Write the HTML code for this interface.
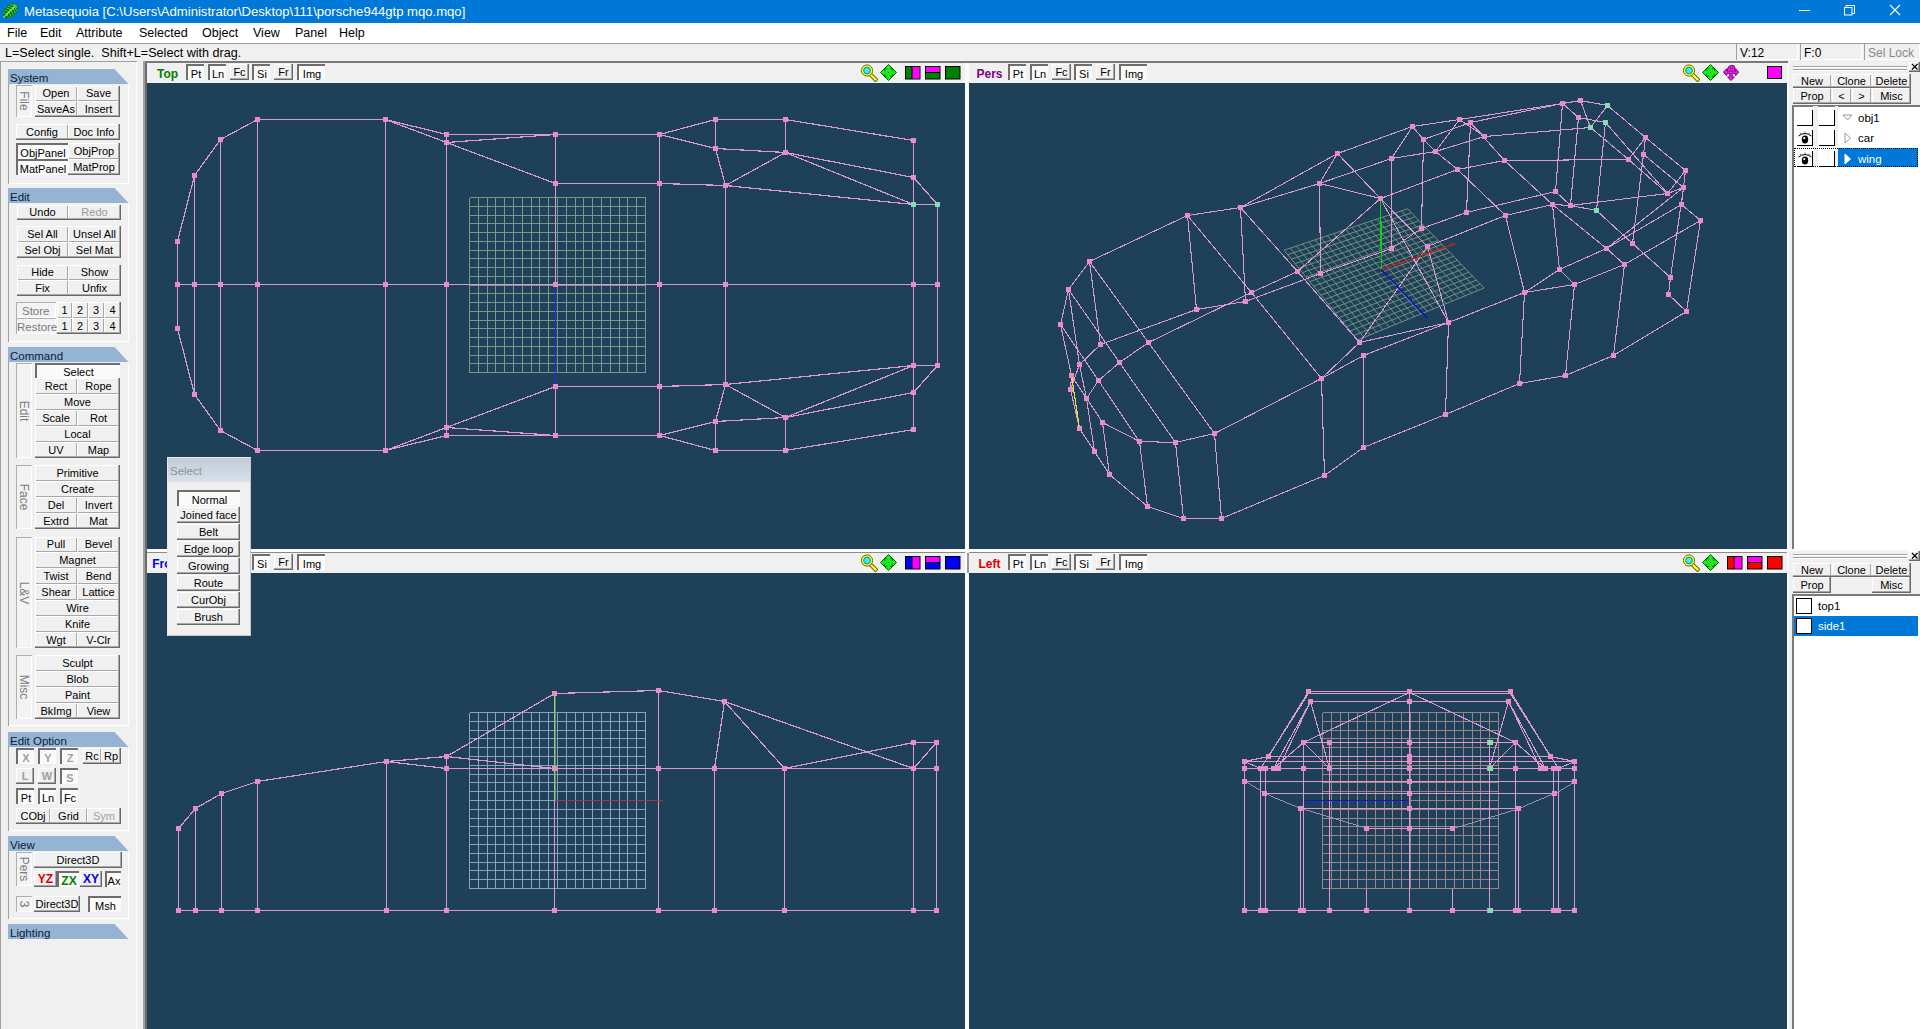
<!DOCTYPE html><html><head><meta charset="utf-8"><style>
html,body{margin:0;padding:0;width:1920px;height:1029px;overflow:hidden;background:#f0f0f0;}
body{position:relative;font-family:"Liberation Sans",sans-serif;}
.t{position:absolute;white-space:pre;line-height:1;}
.b{position:absolute;box-sizing:border-box;text-align:center;white-space:pre;font-family:"Liberation Sans",sans-serif;overflow:hidden;}
svg{position:absolute;left:0;top:0;}
</style></head><body>
<div style="position:absolute;left:0px;top:0px;width:1920px;height:23px;background:#0078d7;"></div>
<svg style="left:0;top:0" width="22" height="22" viewBox="0 0 22 22">
<g transform="rotate(-45 10 11)">
<ellipse cx="10.5" cy="11" rx="8.6" ry="5.8" fill="#0b5a10"/>
<path d="M4 7.2 L6 11 L4 14.8 M6.5 6 L8.8 11 L6.5 16 M9.2 5.4 L11.6 11 L9.2 16.6 M12 5.5 L14.3 11 L12 16.5 M14.7 6.3 L16.6 11 L14.7 15.7 M17 8 L18.2 11 L17 14" stroke="#3cd24a" stroke-width="1.1" fill="none"/>
<path d="M0.8 11 L17.5 11" stroke="#74ff2a" stroke-width="1.4"/>
</g></svg>
<div class="t" style="left:24px;top:4.2px;font:13.1px 'Liberation Sans',sans-serif;color:#fff;">Metasequoia [C:\Users\Administrator\Desktop\111\porsche944gtp mqo.mqo]</div>
<div style="position:absolute;left:1799px;top:10px;width:11px;height:1px;background:#fff;"></div>
<svg style="left:1840px;top:3px" width="20" height="16"><rect x="4.5" y="4.5" width="7.5" height="7.5" fill="none" stroke="#fff"/><path d="M6 4.5 V2.5 H14.5 V10.5 H12" fill="none" stroke="#fff"/></svg>
<svg style="left:1886px;top:1px" width="18" height="18"><path d="M4 4 L14 14 M14 4 L4 14" stroke="#fff" stroke-width="1.1"/></svg>
<div style="position:absolute;left:0px;top:23px;width:1920px;height:20px;background:#fff;"></div>
<div class="t" style="left:7px;top:26px;font:12.5px 'Liberation Sans',sans-serif;color:#000;">File</div>
<div class="t" style="left:40px;top:26px;font:12.5px 'Liberation Sans',sans-serif;color:#000;">Edit</div>
<div class="t" style="left:76px;top:26px;font:12.5px 'Liberation Sans',sans-serif;color:#000;">Attribute</div>
<div class="t" style="left:139px;top:26px;font:12.5px 'Liberation Sans',sans-serif;color:#000;">Selected</div>
<div class="t" style="left:202px;top:26px;font:12.5px 'Liberation Sans',sans-serif;color:#000;">Object</div>
<div class="t" style="left:253px;top:26px;font:12.5px 'Liberation Sans',sans-serif;color:#000;">View</div>
<div class="t" style="left:295px;top:26px;font:12.5px 'Liberation Sans',sans-serif;color:#000;">Panel</div>
<div class="t" style="left:339px;top:26px;font:12.5px 'Liberation Sans',sans-serif;color:#000;">Help</div>
<div style="position:absolute;left:0px;top:43px;width:1920px;height:1px;background:#a0a0a0;"></div>
<div class="t" style="left:5px;top:46px;font:12.6px 'Liberation Sans',sans-serif;color:#000;">L=Select single.  Shift+L=Select with drag.</div>
<div style="position:absolute;left:1736px;top:43px;width:62px;height:17px;box-shadow:inset 1px 1px 0 #a0a0a0, inset -1px -1px 0 #fff;"></div>
<div class="t" style="left:1740px;top:46px;font:12px 'Liberation Sans',sans-serif;color:#000;">V:12</div>
<div style="position:absolute;left:1800px;top:43px;width:62px;height:17px;box-shadow:inset 1px 1px 0 #a0a0a0, inset -1px -1px 0 #fff;"></div>
<div class="t" style="left:1804px;top:46px;font:12px 'Liberation Sans',sans-serif;color:#000;">F:0</div>
<div style="position:absolute;left:1864px;top:43px;width:56px;height:17px;box-shadow:inset 1px 1px 0 #a0a0a0, inset -1px -1px 0 #fff;"></div>
<div class="t" style="left:1868px;top:46px;font:12px 'Liberation Sans',sans-serif;color:#888;">Sel Lock</div>
<div style="position:absolute;left:0px;top:61px;width:137px;height:968px;background:#f0f0f0;box-shadow:inset 1px 1px 0 #a0a0a0, inset -1px 0 0 #fff;"></div>
<svg style="left:8px;top:69px" width="122" height="15"><polygon points="0,0 106.5,0 120.5,15 0,15" fill="#95b3d3"/></svg>
<div class="t" style="left:10px;top:71.5px;font:11.5px 'Liberation Sans',sans-serif;color:#0c1c38;">System</div>
<div style="position:absolute;left:8px;top:84px;width:121px;height:100px;box-shadow:inset 1px 0 0 #a0a0a0, inset -1px -1px 0 #fff;"></div>
<div style="position:absolute;left:16px;top:85px;width:16px;height:32px;background:#f3f3f3;box-shadow:inset 1px 1px 0 #b0b0b0, inset -1px -1px 0 #fff;"></div>
<div class="t" style="left:24.0px;top:101.0px;font-size:12px;color:#7c7c7c;transform:translate(-50%,-50%) rotate(90deg);">File</div>
<div class="b" style="left:35px;top:86px;width:42px;height:15px;line-height:15px;background:#f0f0f0;box-shadow:inset 1px 1px 0 #fff, inset -1px -1px 0 #a8a8a8;color:#000;font-size:11px;"><span style="">Open</span></div>
<div class="b" style="left:77px;top:86px;width:43px;height:15px;line-height:15px;background:#f0f0f0;box-shadow:inset 1px 1px 0 #fff, inset -1px -1px 0 #a8a8a8;color:#000;font-size:11px;"><span style="">Save</span></div>
<div class="b" style="left:35px;top:101px;width:42px;height:16px;line-height:16px;background:#f0f0f0;box-shadow:inset 1px 1px 0 #fff, inset -1px -1px 0 #a8a8a8;color:#000;font-size:11px;"><span style="">SaveAs</span></div>
<div class="b" style="left:77px;top:101px;width:43px;height:16px;line-height:16px;background:#f0f0f0;box-shadow:inset 1px 1px 0 #fff, inset -1px -1px 0 #a8a8a8;color:#000;font-size:11px;"><span style="">Insert</span></div>
<div style="position:absolute;left:35px;top:86px;width:85px;height:31px;box-shadow:inset -1px -1px 0 #696969, inset -2px -2px 0 #a8a8a8;"></div>
<div class="b" style="left:16px;top:124px;width:52px;height:16px;line-height:16px;background:#f0f0f0;box-shadow:inset 1px 1px 0 #fff, inset -1px -1px 0 #a8a8a8;color:#000;font-size:11px;"><span style="">Config</span></div>
<div class="b" style="left:68px;top:124px;width:52px;height:16px;line-height:16px;background:#f0f0f0;box-shadow:inset 1px 1px 0 #fff, inset -1px -1px 0 #a8a8a8;color:#000;font-size:11px;"><span style="">Doc Info</span></div>
<div style="position:absolute;left:16px;top:124px;width:104px;height:16px;box-shadow:inset -1px -1px 0 #696969, inset -2px -2px 0 #a8a8a8;"></div>
<div class="b" style="left:16px;top:143px;width:52px;height:16px;line-height:16px;background:#fafafa;box-shadow:inset 2px 2px 0 #6e6e6e;color:#000;font-size:11px;"><span style="position:relative;top:1.5px;left:1px;">ObjPanel</span></div>
<div class="b" style="left:16px;top:159px;width:52px;height:16px;line-height:16px;background:#fafafa;box-shadow:inset 2px 2px 0 #6e6e6e;color:#000;font-size:11px;"><span style="position:relative;top:1.5px;left:1px;">MatPanel</span></div>
<div class="b" style="left:68px;top:143px;width:52px;height:16px;line-height:16px;background:#f0f0f0;box-shadow:inset 1px 1px 0 #fff, inset -1px -1px 0 #a8a8a8;color:#000;font-size:11px;"><span style="">ObjProp</span></div>
<div class="b" style="left:68px;top:159px;width:52px;height:16px;line-height:16px;background:#f0f0f0;box-shadow:inset 1px 1px 0 #fff, inset -1px -1px 0 #a8a8a8;color:#000;font-size:11px;"><span style="">MatProp</span></div>
<div style="position:absolute;left:68px;top:143px;width:52px;height:32px;box-shadow:inset -1px -1px 0 #696969, inset -2px -2px 0 #a8a8a8;"></div>
<svg style="left:8px;top:188px" width="122" height="15"><polygon points="0,0 106.5,0 120.5,15 0,15" fill="#95b3d3"/></svg>
<div class="t" style="left:10px;top:190.5px;font:11.5px 'Liberation Sans',sans-serif;color:#0c1c38;">Edit</div>
<div style="position:absolute;left:8px;top:203px;width:121px;height:139px;box-shadow:inset 1px 0 0 #a0a0a0, inset -1px -1px 0 #fff;"></div>
<div class="b" style="left:17px;top:205px;width:51px;height:15px;line-height:15px;background:#f0f0f0;box-shadow:inset 1px 1px 0 #fff, inset -1px -1px 0 #a8a8a8;color:#000;font-size:11px;"><span style="">Undo</span></div>
<div class="b" style="left:68px;top:205px;width:53px;height:15px;line-height:15px;background:#f0f0f0;box-shadow:inset 1px 1px 0 #fff, inset -1px -1px 0 #a8a8a8;color:#9a9a9a;font-size:11px;"><span style="">Redo</span></div>
<div style="position:absolute;left:17px;top:205px;width:104px;height:15px;box-shadow:inset -1px -1px 0 #696969, inset -2px -2px 0 #a8a8a8;"></div>
<div class="b" style="left:17px;top:226px;width:51px;height:16px;line-height:16px;background:#f0f0f0;box-shadow:inset 1px 1px 0 #fff, inset -1px -1px 0 #a8a8a8;color:#000;font-size:11px;"><span style="">Sel All</span></div>
<div class="b" style="left:68px;top:226px;width:53px;height:16px;line-height:16px;background:#f0f0f0;box-shadow:inset 1px 1px 0 #fff, inset -1px -1px 0 #a8a8a8;color:#000;font-size:11px;"><span style="">Unsel All</span></div>
<div class="b" style="left:17px;top:242px;width:51px;height:16px;line-height:16px;background:#f0f0f0;box-shadow:inset 1px 1px 0 #fff, inset -1px -1px 0 #a8a8a8;color:#000;font-size:11px;"><span style="">Sel Obj</span></div>
<div class="b" style="left:68px;top:242px;width:53px;height:16px;line-height:16px;background:#f0f0f0;box-shadow:inset 1px 1px 0 #fff, inset -1px -1px 0 #a8a8a8;color:#000;font-size:11px;"><span style="">Sel Mat</span></div>
<div style="position:absolute;left:17px;top:226px;width:104px;height:32px;box-shadow:inset -1px -1px 0 #696969, inset -2px -2px 0 #a8a8a8;"></div>
<div class="b" style="left:17px;top:265px;width:51px;height:15px;line-height:15px;background:#f0f0f0;box-shadow:inset 1px 1px 0 #fff, inset -1px -1px 0 #a8a8a8;color:#000;font-size:11px;"><span style="">Hide</span></div>
<div class="b" style="left:68px;top:265px;width:53px;height:15px;line-height:15px;background:#f0f0f0;box-shadow:inset 1px 1px 0 #fff, inset -1px -1px 0 #a8a8a8;color:#000;font-size:11px;"><span style="">Show</span></div>
<div class="b" style="left:17px;top:280px;width:51px;height:16px;line-height:16px;background:#f0f0f0;box-shadow:inset 1px 1px 0 #fff, inset -1px -1px 0 #a8a8a8;color:#000;font-size:11px;"><span style="">Fix</span></div>
<div class="b" style="left:68px;top:280px;width:53px;height:16px;line-height:16px;background:#f0f0f0;box-shadow:inset 1px 1px 0 #fff, inset -1px -1px 0 #a8a8a8;color:#000;font-size:11px;"><span style="">Unfix</span></div>
<div style="position:absolute;left:17px;top:265px;width:104px;height:31px;box-shadow:inset -1px -1px 0 #696969, inset -2px -2px 0 #a8a8a8;"></div>
<div style="position:absolute;left:16px;top:302px;width:40px;height:16px;background:#f3f3f3;box-shadow:inset 1px 1px 0 #b0b0b0, inset -1px -1px 0 #fff;"></div>
<div class="t" style="left:36.0px;top:310.0px;font-size:12px;color:#7c7c7c;transform:translate(-50%,-50%) rotate(90deg);"></div>
<div class="t" style="left:22px;top:304.5px;font:11.5px 'Liberation Sans',sans-serif;color:#7a7a7a;">Store</div>
<div style="position:absolute;left:16px;top:318px;width:40px;height:16px;background:#f3f3f3;box-shadow:inset 1px 1px 0 #b0b0b0, inset -1px -1px 0 #fff;"></div>
<div class="t" style="left:36.0px;top:326.0px;font-size:12px;color:#7c7c7c;transform:translate(-50%,-50%) rotate(90deg);"></div>
<div class="t" style="left:17px;top:320.5px;font:11.5px 'Liberation Sans',sans-serif;color:#7a7a7a;">Restore</div>
<div class="b" style="left:57px;top:302px;width:15px;height:16px;line-height:16px;background:#f0f0f0;box-shadow:inset 1px 1px 0 #fff, inset -1px -1px 0 #a8a8a8;color:#000;font-size:11px;"><span style="">1</span></div>
<div class="b" style="left:72px;top:302px;width:16px;height:16px;line-height:16px;background:#f0f0f0;box-shadow:inset 1px 1px 0 #fff, inset -1px -1px 0 #a8a8a8;color:#000;font-size:11px;"><span style="">2</span></div>
<div class="b" style="left:88px;top:302px;width:16px;height:16px;line-height:16px;background:#f0f0f0;box-shadow:inset 1px 1px 0 #fff, inset -1px -1px 0 #a8a8a8;color:#000;font-size:11px;"><span style="">3</span></div>
<div class="b" style="left:104px;top:302px;width:17px;height:16px;line-height:16px;background:#f0f0f0;box-shadow:inset 1px 1px 0 #fff, inset -1px -1px 0 #a8a8a8;color:#000;font-size:11px;"><span style="">4</span></div>
<div class="b" style="left:57px;top:318px;width:15px;height:16px;line-height:16px;background:#f0f0f0;box-shadow:inset 1px 1px 0 #fff, inset -1px -1px 0 #a8a8a8;color:#000;font-size:11px;"><span style="">1</span></div>
<div class="b" style="left:72px;top:318px;width:16px;height:16px;line-height:16px;background:#f0f0f0;box-shadow:inset 1px 1px 0 #fff, inset -1px -1px 0 #a8a8a8;color:#000;font-size:11px;"><span style="">2</span></div>
<div class="b" style="left:88px;top:318px;width:16px;height:16px;line-height:16px;background:#f0f0f0;box-shadow:inset 1px 1px 0 #fff, inset -1px -1px 0 #a8a8a8;color:#000;font-size:11px;"><span style="">3</span></div>
<div class="b" style="left:104px;top:318px;width:17px;height:16px;line-height:16px;background:#f0f0f0;box-shadow:inset 1px 1px 0 #fff, inset -1px -1px 0 #a8a8a8;color:#000;font-size:11px;"><span style="">4</span></div>
<div style="position:absolute;left:57px;top:302px;width:64px;height:32px;box-shadow:inset -1px -1px 0 #696969, inset -2px -2px 0 #a8a8a8;"></div>
<svg style="left:8px;top:347px" width="122" height="15"><polygon points="0,0 106.5,0 120.5,15 0,15" fill="#95b3d3"/></svg>
<div class="t" style="left:10px;top:349.5px;font:11.5px 'Liberation Sans',sans-serif;color:#0c1c38;">Command</div>
<div style="position:absolute;left:8px;top:362px;width:121px;height:364px;box-shadow:inset 1px 0 0 #a0a0a0, inset -1px -1px 0 #fff;"></div>
<div style="position:absolute;left:16px;top:363px;width:16px;height:95px;background:#f3f3f3;box-shadow:inset 1px 1px 0 #b0b0b0, inset -1px -1px 0 #fff;"></div>
<div class="t" style="left:24.0px;top:410.5px;font-size:12px;color:#7c7c7c;transform:translate(-50%,-50%) rotate(90deg);">Edit</div>
<div style="position:absolute;left:16px;top:465px;width:16px;height:64px;background:#f3f3f3;box-shadow:inset 1px 1px 0 #b0b0b0, inset -1px -1px 0 #fff;"></div>
<div class="t" style="left:24.0px;top:497.0px;font-size:12px;color:#7c7c7c;transform:translate(-50%,-50%) rotate(90deg);">Face</div>
<div style="position:absolute;left:16px;top:537px;width:16px;height:111px;background:#f3f3f3;box-shadow:inset 1px 1px 0 #b0b0b0, inset -1px -1px 0 #fff;"></div>
<div class="t" style="left:24.0px;top:592.5px;font-size:12px;color:#7c7c7c;transform:translate(-50%,-50%) rotate(90deg);">L&amp;V</div>
<div style="position:absolute;left:16px;top:655px;width:16px;height:64px;background:#f3f3f3;box-shadow:inset 1px 1px 0 #b0b0b0, inset -1px -1px 0 #fff;"></div>
<div class="t" style="left:24.0px;top:687.0px;font-size:12px;color:#7c7c7c;transform:translate(-50%,-50%) rotate(90deg);">Misc</div>
<div class="b" style="left:35px;top:363px;width:85px;height:15px;line-height:15px;background:#fafafa;box-shadow:inset 2px 2px 0 #6e6e6e;color:#000;font-size:11px;"><span style="position:relative;top:1.5px;left:1px;">Select</span></div>
<div class="b" style="left:35px;top:378px;width:42px;height:16px;line-height:16px;background:#f0f0f0;box-shadow:inset 1px 1px 0 #fff, inset -1px -1px 0 #a8a8a8;color:#000;font-size:11px;"><span style="">Rect</span></div>
<div class="b" style="left:77px;top:378px;width:43px;height:16px;line-height:16px;background:#f0f0f0;box-shadow:inset 1px 1px 0 #fff, inset -1px -1px 0 #a8a8a8;color:#000;font-size:11px;"><span style="">Rope</span></div>
<div class="b" style="left:35px;top:394px;width:85px;height:16px;line-height:16px;background:#f0f0f0;box-shadow:inset 1px 1px 0 #fff, inset -1px -1px 0 #a8a8a8;color:#000;font-size:11px;"><span style="">Move</span></div>
<div class="b" style="left:35px;top:410px;width:42px;height:16px;line-height:16px;background:#f0f0f0;box-shadow:inset 1px 1px 0 #fff, inset -1px -1px 0 #a8a8a8;color:#000;font-size:11px;"><span style="">Scale</span></div>
<div class="b" style="left:77px;top:410px;width:43px;height:16px;line-height:16px;background:#f0f0f0;box-shadow:inset 1px 1px 0 #fff, inset -1px -1px 0 #a8a8a8;color:#000;font-size:11px;"><span style="">Rot</span></div>
<div class="b" style="left:35px;top:426px;width:85px;height:16px;line-height:16px;background:#f0f0f0;box-shadow:inset 1px 1px 0 #fff, inset -1px -1px 0 #a8a8a8;color:#000;font-size:11px;"><span style="">Local</span></div>
<div class="b" style="left:35px;top:442px;width:42px;height:16px;line-height:16px;background:#f0f0f0;box-shadow:inset 1px 1px 0 #fff, inset -1px -1px 0 #a8a8a8;color:#000;font-size:11px;"><span style="">UV</span></div>
<div class="b" style="left:77px;top:442px;width:43px;height:16px;line-height:16px;background:#f0f0f0;box-shadow:inset 1px 1px 0 #fff, inset -1px -1px 0 #a8a8a8;color:#000;font-size:11px;"><span style="">Map</span></div>
<div style="position:absolute;left:35px;top:378px;width:85px;height:80px;box-shadow:inset -1px -1px 0 #696969, inset -2px -2px 0 #a8a8a8;"></div>
<div class="b" style="left:35px;top:465px;width:85px;height:16px;line-height:16px;background:#f0f0f0;box-shadow:inset 1px 1px 0 #fff, inset -1px -1px 0 #a8a8a8;color:#000;font-size:11px;"><span style="">Primitive</span></div>
<div class="b" style="left:35px;top:481px;width:85px;height:16px;line-height:16px;background:#f0f0f0;box-shadow:inset 1px 1px 0 #fff, inset -1px -1px 0 #a8a8a8;color:#000;font-size:11px;"><span style="">Create</span></div>
<div class="b" style="left:35px;top:497px;width:42px;height:16px;line-height:16px;background:#f0f0f0;box-shadow:inset 1px 1px 0 #fff, inset -1px -1px 0 #a8a8a8;color:#000;font-size:11px;"><span style="">Del</span></div>
<div class="b" style="left:77px;top:497px;width:43px;height:16px;line-height:16px;background:#f0f0f0;box-shadow:inset 1px 1px 0 #fff, inset -1px -1px 0 #a8a8a8;color:#000;font-size:11px;"><span style="">Invert</span></div>
<div class="b" style="left:35px;top:513px;width:42px;height:16px;line-height:16px;background:#f0f0f0;box-shadow:inset 1px 1px 0 #fff, inset -1px -1px 0 #a8a8a8;color:#000;font-size:11px;"><span style="">Extrd</span></div>
<div class="b" style="left:77px;top:513px;width:43px;height:16px;line-height:16px;background:#f0f0f0;box-shadow:inset 1px 1px 0 #fff, inset -1px -1px 0 #a8a8a8;color:#000;font-size:11px;"><span style="">Mat</span></div>
<div style="position:absolute;left:35px;top:465px;width:85px;height:64px;box-shadow:inset -1px -1px 0 #696969, inset -2px -2px 0 #a8a8a8;"></div>
<div class="b" style="left:35px;top:537px;width:42px;height:15px;line-height:15px;background:#f0f0f0;box-shadow:inset 1px 1px 0 #fff, inset -1px -1px 0 #a8a8a8;color:#000;font-size:11px;"><span style="">Pull</span></div>
<div class="b" style="left:77px;top:537px;width:43px;height:15px;line-height:15px;background:#f0f0f0;box-shadow:inset 1px 1px 0 #fff, inset -1px -1px 0 #a8a8a8;color:#000;font-size:11px;"><span style="">Bevel</span></div>
<div class="b" style="left:35px;top:552px;width:85px;height:16px;line-height:16px;background:#f0f0f0;box-shadow:inset 1px 1px 0 #fff, inset -1px -1px 0 #a8a8a8;color:#000;font-size:11px;"><span style="">Magnet</span></div>
<div class="b" style="left:35px;top:568px;width:42px;height:16px;line-height:16px;background:#f0f0f0;box-shadow:inset 1px 1px 0 #fff, inset -1px -1px 0 #a8a8a8;color:#000;font-size:11px;"><span style="">Twist</span></div>
<div class="b" style="left:77px;top:568px;width:43px;height:16px;line-height:16px;background:#f0f0f0;box-shadow:inset 1px 1px 0 #fff, inset -1px -1px 0 #a8a8a8;color:#000;font-size:11px;"><span style="">Bend</span></div>
<div class="b" style="left:35px;top:584px;width:42px;height:16px;line-height:16px;background:#f0f0f0;box-shadow:inset 1px 1px 0 #fff, inset -1px -1px 0 #a8a8a8;color:#000;font-size:11px;"><span style="">Shear</span></div>
<div class="b" style="left:77px;top:584px;width:43px;height:16px;line-height:16px;background:#f0f0f0;box-shadow:inset 1px 1px 0 #fff, inset -1px -1px 0 #a8a8a8;color:#000;font-size:11px;"><span style="">Lattice</span></div>
<div class="b" style="left:35px;top:600px;width:85px;height:16px;line-height:16px;background:#f0f0f0;box-shadow:inset 1px 1px 0 #fff, inset -1px -1px 0 #a8a8a8;color:#000;font-size:11px;"><span style="">Wire</span></div>
<div class="b" style="left:35px;top:616px;width:85px;height:16px;line-height:16px;background:#f0f0f0;box-shadow:inset 1px 1px 0 #fff, inset -1px -1px 0 #a8a8a8;color:#000;font-size:11px;"><span style="">Knife</span></div>
<div class="b" style="left:35px;top:632px;width:42px;height:16px;line-height:16px;background:#f0f0f0;box-shadow:inset 1px 1px 0 #fff, inset -1px -1px 0 #a8a8a8;color:#000;font-size:11px;"><span style="">Wgt</span></div>
<div class="b" style="left:77px;top:632px;width:43px;height:16px;line-height:16px;background:#f0f0f0;box-shadow:inset 1px 1px 0 #fff, inset -1px -1px 0 #a8a8a8;color:#000;font-size:11px;"><span style="">V-Clr</span></div>
<div style="position:absolute;left:35px;top:537px;width:85px;height:111px;box-shadow:inset -1px -1px 0 #696969, inset -2px -2px 0 #a8a8a8;"></div>
<div class="b" style="left:35px;top:655px;width:85px;height:16px;line-height:16px;background:#f0f0f0;box-shadow:inset 1px 1px 0 #fff, inset -1px -1px 0 #a8a8a8;color:#000;font-size:11px;"><span style="">Sculpt</span></div>
<div class="b" style="left:35px;top:671px;width:85px;height:16px;line-height:16px;background:#f0f0f0;box-shadow:inset 1px 1px 0 #fff, inset -1px -1px 0 #a8a8a8;color:#000;font-size:11px;"><span style="">Blob</span></div>
<div class="b" style="left:35px;top:687px;width:85px;height:16px;line-height:16px;background:#f0f0f0;box-shadow:inset 1px 1px 0 #fff, inset -1px -1px 0 #a8a8a8;color:#000;font-size:11px;"><span style="">Paint</span></div>
<div class="b" style="left:35px;top:703px;width:42px;height:16px;line-height:16px;background:#f0f0f0;box-shadow:inset 1px 1px 0 #fff, inset -1px -1px 0 #a8a8a8;color:#000;font-size:11px;"><span style="">BkImg</span></div>
<div class="b" style="left:77px;top:703px;width:43px;height:16px;line-height:16px;background:#f0f0f0;box-shadow:inset 1px 1px 0 #fff, inset -1px -1px 0 #a8a8a8;color:#000;font-size:11px;"><span style="">View</span></div>
<div style="position:absolute;left:35px;top:655px;width:85px;height:64px;box-shadow:inset -1px -1px 0 #696969, inset -2px -2px 0 #a8a8a8;"></div>
<svg style="left:8px;top:732px" width="122" height="15"><polygon points="0,0 106.5,0 120.5,15 0,15" fill="#95b3d3"/></svg>
<div class="t" style="left:10px;top:734.5px;font:11.5px 'Liberation Sans',sans-serif;color:#0c1c38;">Edit Option</div>
<div style="position:absolute;left:8px;top:747px;width:121px;height:84px;box-shadow:inset 1px 0 0 #a0a0a0, inset -1px -1px 0 #fff;"></div>
<div class="b" style="left:16px;top:748px;width:18px;height:16px;line-height:16px;background:#fafafa;box-shadow:inset 2px 2px 0 #6e6e6e;color:#a0a0a0;font-size:11px;"><span style="position:relative;top:1.5px;left:1px;"><b>X</b></span></div>
<div class="b" style="left:38px;top:748px;width:18px;height:16px;line-height:16px;background:#fafafa;box-shadow:inset 2px 2px 0 #6e6e6e;color:#a0a0a0;font-size:11px;"><span style="position:relative;top:1.5px;left:1px;"><b>Y</b></span></div>
<div class="b" style="left:60px;top:748px;width:18px;height:16px;line-height:16px;background:#fafafa;box-shadow:inset 2px 2px 0 #6e6e6e;color:#a0a0a0;font-size:11px;"><span style="position:relative;top:1.5px;left:1px;"><b>Z</b></span></div>
<div class="b" style="left:83px;top:748px;width:18px;height:16px;line-height:16px;background:#f0f0f0;box-shadow:inset 1px 1px 0 #fff, inset -1px -1px 0 #a8a8a8;color:#000;font-size:11px;"><span style="">Rc</span></div>
<div class="b" style="left:101px;top:748px;width:20px;height:16px;line-height:16px;background:#f0f0f0;box-shadow:inset 1px 1px 0 #fff, inset -1px -1px 0 #a8a8a8;color:#000;font-size:11px;"><span style="">Rp</span></div>
<div style="position:absolute;left:83px;top:748px;width:38px;height:16px;box-shadow:inset -1px -1px 0 #696969, inset -2px -2px 0 #a8a8a8;"></div>
<div class="b" style="left:16px;top:768px;width:18px;height:16px;line-height:16px;background:#f0f0f0;box-shadow:inset 1px 1px 0 #fff, inset -1px -1px 0 #a8a8a8;color:#a0a0a0;font-size:11px;"><span style=""><b>L</b></span></div>
<div style="position:absolute;left:16px;top:768px;width:18px;height:16px;box-shadow:inset -1px -1px 0 #696969, inset -2px -2px 0 #a8a8a8;"></div>
<div class="b" style="left:38px;top:768px;width:18px;height:16px;line-height:16px;background:#f0f0f0;box-shadow:inset 1px 1px 0 #fff, inset -1px -1px 0 #a8a8a8;color:#a0a0a0;font-size:11px;"><span style=""><b>W</b></span></div>
<div style="position:absolute;left:38px;top:768px;width:18px;height:16px;box-shadow:inset -1px -1px 0 #696969, inset -2px -2px 0 #a8a8a8;"></div>
<div class="b" style="left:60px;top:768px;width:18px;height:16px;line-height:16px;background:#fafafa;box-shadow:inset 2px 2px 0 #6e6e6e;color:#a0a0a0;font-size:11px;"><span style="position:relative;top:1.5px;left:1px;"><b>S</b></span></div>
<div class="b" style="left:16px;top:788px;width:18px;height:16px;line-height:16px;background:#fafafa;box-shadow:inset 2px 2px 0 #6e6e6e;color:#000;font-size:11px;"><span style="position:relative;top:1.5px;left:1px;">Pt</span></div>
<div class="b" style="left:38px;top:788px;width:18px;height:16px;line-height:16px;background:#fafafa;box-shadow:inset 2px 2px 0 #6e6e6e;color:#000;font-size:11px;"><span style="position:relative;top:1.5px;left:1px;">Ln</span></div>
<div class="b" style="left:60px;top:788px;width:18px;height:16px;line-height:16px;background:#fafafa;box-shadow:inset 2px 2px 0 #6e6e6e;color:#000;font-size:11px;"><span style="position:relative;top:1.5px;left:1px;">Fc</span></div>
<div class="b" style="left:16px;top:808px;width:34px;height:16px;line-height:16px;background:#f0f0f0;box-shadow:inset 1px 1px 0 #fff, inset -1px -1px 0 #a8a8a8;color:#000;font-size:11px;"><span style="">CObj</span></div>
<div class="b" style="left:50px;top:808px;width:37px;height:16px;line-height:16px;background:#f0f0f0;box-shadow:inset 1px 1px 0 #fff, inset -1px -1px 0 #a8a8a8;color:#000;font-size:11px;"><span style="">Grid</span></div>
<div class="b" style="left:87px;top:808px;width:34px;height:16px;line-height:16px;background:#f0f0f0;box-shadow:inset 1px 1px 0 #fff, inset -1px -1px 0 #a8a8a8;color:#a0a0a0;font-size:11px;"><span style="">Sym</span></div>
<div style="position:absolute;left:16px;top:808px;width:105px;height:16px;box-shadow:inset -1px -1px 0 #696969, inset -2px -2px 0 #a8a8a8;"></div>
<svg style="left:8px;top:836px" width="122" height="15"><polygon points="0,0 106.5,0 120.5,15 0,15" fill="#95b3d3"/></svg>
<div class="t" style="left:10px;top:838.5px;font:11.5px 'Liberation Sans',sans-serif;color:#0c1c38;">View</div>
<div style="position:absolute;left:8px;top:851px;width:121px;height:68px;box-shadow:inset 1px 0 0 #a0a0a0, inset -1px -1px 0 #fff;"></div>
<div style="position:absolute;left:16px;top:852px;width:16px;height:34px;background:#f3f3f3;box-shadow:inset 1px 1px 0 #b0b0b0, inset -1px -1px 0 #fff;"></div>
<div class="t" style="left:24.0px;top:869.0px;font-size:12px;color:#7c7c7c;transform:translate(-50%,-50%) rotate(90deg);">Pers</div>
<div class="b" style="left:34px;top:852px;width:88px;height:16px;line-height:16px;background:#f0f0f0;box-shadow:inset 1px 1px 0 #fff, inset -1px -1px 0 #a8a8a8;color:#000;font-size:11px;"><span style="">Direct3D</span></div>
<div style="position:absolute;left:34px;top:852px;width:88px;height:16px;box-shadow:inset -1px -1px 0 #696969, inset -2px -2px 0 #a8a8a8;"></div>
<div class="b" style="left:34px;top:871px;width:23px;height:16px;line-height:16px;background:#f0f0f0;box-shadow:inset 1px 1px 0 #fff, inset -1px -1px 0 #a8a8a8;color:#e00000;font-size:12px;"><span style=""><b>YZ</b></span></div>
<div style="position:absolute;left:34px;top:871px;width:23px;height:16px;box-shadow:inset -1px -1px 0 #696969, inset -2px -2px 0 #a8a8a8;"></div>
<div class="b" style="left:57px;top:871px;width:22px;height:16px;line-height:16px;background:#fafafa;box-shadow:inset 2px 2px 0 #6e6e6e;color:#008000;font-size:12px;"><span style="position:relative;top:1.5px;left:1px;"><b>ZX</b></span></div>
<div class="b" style="left:80px;top:871px;width:22px;height:16px;line-height:16px;background:#f0f0f0;box-shadow:inset 1px 1px 0 #fff, inset -1px -1px 0 #a8a8a8;color:#0000e0;font-size:12px;"><span style=""><b>XY</b></span></div>
<div style="position:absolute;left:80px;top:871px;width:22px;height:16px;box-shadow:inset -1px -1px 0 #696969, inset -2px -2px 0 #a8a8a8;"></div>
<div class="b" style="left:105px;top:871px;width:16px;height:16px;line-height:16px;background:#fafafa;box-shadow:inset 2px 2px 0 #6e6e6e;color:#000;font-size:11px;"><span style="position:relative;top:1.5px;left:1px;">Ax</span></div>
<div style="position:absolute;left:16px;top:896px;width:16px;height:16px;background:#f3f3f3;box-shadow:inset 1px 1px 0 #b0b0b0, inset -1px -1px 0 #fff;"></div>
<div class="t" style="left:24.0px;top:904.0px;font-size:12px;color:#7c7c7c;transform:translate(-50%,-50%) rotate(90deg);">3</div>
<div class="b" style="left:34px;top:896px;width:46px;height:16px;line-height:16px;background:#f0f0f0;box-shadow:inset 1px 1px 0 #fff, inset -1px -1px 0 #a8a8a8;color:#000;font-size:11px;"><span style="">Direct3D</span></div>
<div style="position:absolute;left:34px;top:896px;width:46px;height:16px;box-shadow:inset -1px -1px 0 #696969, inset -2px -2px 0 #a8a8a8;"></div>
<div class="b" style="left:88px;top:896px;width:33px;height:16px;line-height:16px;background:#fafafa;box-shadow:inset 2px 2px 0 #6e6e6e;color:#000;font-size:11px;"><span style="position:relative;top:1.5px;left:1px;">Msh</span></div>
<svg style="left:8px;top:924px" width="122" height="15"><polygon points="0,0 106.5,0 120.5,15 0,15" fill="#95b3d3"/></svg>
<div class="t" style="left:10px;top:926.5px;font:11.5px 'Liberation Sans',sans-serif;color:#0c1c38;">Lighting</div>
<div style="position:absolute;left:143px;top:61px;width:1646px;height:968px;background:#f0f0f0;"></div>
<div style="position:absolute;left:143px;top:61px;width:1645px;height:2px;background:#7a7a7a;"></div>
<div style="position:absolute;left:143px;top:61px;width:2px;height:968px;background:#a0a0a0;"></div>
<div style="position:absolute;left:145px;top:63px;width:2px;height:966px;background:#6a6a6a;"></div>
<div style="position:absolute;left:147px;top:83px;width:818px;height:466px;background:#1e4058;"></div>
<div style="position:absolute;left:969px;top:83px;width:818px;height:466px;background:#1e4058;"></div>
<div style="position:absolute;left:147px;top:573px;width:818px;height:456px;background:#1e4058;"></div>
<div style="position:absolute;left:969px;top:573px;width:818px;height:456px;background:#1e4058;"></div>
<div style="position:absolute;left:965px;top:63px;width:4px;height:966px;background:#fbfbfb;"></div>
<div style="position:absolute;left:147px;top:549px;width:1640px;height:3px;background:#fbfbfb;"></div>
<div style="position:absolute;left:147px;top:552px;width:818px;height:1px;background:#8a8a8a;"></div>
<div style="position:absolute;left:969px;top:552px;width:818px;height:1px;background:#8a8a8a;"></div>
<div style="position:absolute;left:967px;top:553px;width:2px;height:20px;background:#9a9a9a;"></div>
<div style="position:absolute;left:1787px;top:63px;width:2px;height:966px;background:#fbfbfb;"></div>
<div class="t" style="left:167.5px;top:67px;font:bold 12px Liberation Sans,sans-serif;color:#008000;transform:translateX(-50%);">Top</div>
<div class="b" style="left:186px;top:64px;width:18px;height:16px;line-height:16px;background:#fafafa;box-shadow:inset 2px 2px 0 #6e6e6e;color:#000;font-size:11px;"><span style="position:relative;top:1.5px;left:1px;">Pt</span></div>
<div class="b" style="left:208px;top:64px;width:18px;height:16px;line-height:16px;background:#fafafa;box-shadow:inset 2px 2px 0 #6e6e6e;color:#000;font-size:11px;"><span style="position:relative;top:1.5px;left:1px;">Ln</span></div>
<div class="b" style="left:230px;top:64px;width:19px;height:16px;line-height:16px;background:#f0f0f0;box-shadow:inset 1px 1px 0 #fff, inset -1px -1px 0 #a8a8a8;color:#000;font-size:11px;"><span style="">Fc</span></div>
<div style="position:absolute;left:230px;top:64px;width:19px;height:16px;box-shadow:inset -1px -1px 0 #696969, inset -2px -2px 0 #a8a8a8;"></div>
<div class="b" style="left:252px;top:64px;width:18px;height:16px;line-height:16px;background:#fafafa;box-shadow:inset 2px 2px 0 #6e6e6e;color:#000;font-size:11px;"><span style="position:relative;top:1.5px;left:1px;">Si</span></div>
<div class="b" style="left:274px;top:64px;width:19px;height:16px;line-height:16px;background:#f0f0f0;box-shadow:inset 1px 1px 0 #fff, inset -1px -1px 0 #a8a8a8;color:#000;font-size:11px;"><span style="">Fr</span></div>
<div style="position:absolute;left:274px;top:64px;width:19px;height:16px;box-shadow:inset -1px -1px 0 #696969, inset -2px -2px 0 #a8a8a8;"></div>
<div class="b" style="left:297px;top:64px;width:28px;height:16px;line-height:16px;background:#fafafa;box-shadow:inset 2px 2px 0 #6e6e6e;color:#000;font-size:11px;"><span style="position:relative;top:1.5px;left:1px;">Img</span></div>
<svg style="left:860px;top:64px" width="18" height="18" viewBox="0 0 18 18"><path d="M10.5 10.5 L15.5 15.5" stroke="#6b6b00" stroke-width="4.2" stroke-linecap="square"/><path d="M10.5 10.5 L15.5 15.5" stroke="#ffff40" stroke-width="2.2" stroke-linecap="square"/><circle cx="7" cy="6.5" r="5.6" fill="#ffff40" stroke="#6b6b00" stroke-width="1"/><circle cx="7" cy="6.5" r="3.4" fill="#30f0ff" stroke="#0a6a4a" stroke-width="0.8"/></svg>
<svg style="left:880px;top:64px" width="18" height="18" viewBox="0 0 18 18"><polygon points="8.5,0.5 16.5,8.5 8.5,16.5 0.5,8.5" fill="#18f018" stroke="#0a5a0a" stroke-width="1"/><path d="M5.2 6.8 a1.3 1.3 0 1 1 1.6 -1.6 M11.8 6.8 a1.3 1.3 0 1 0 -1.6 -1.6 M5.2 10.2 a1.3 1.3 0 1 0 1.6 1.6 M11.8 10.2 a1.3 1.3 0 1 1 -1.6 1.6" stroke="#0a4a0a" stroke-width="0.9" fill="none"/><circle cx="8.5" cy="8.5" r="0.6" fill="#0a4a0a"/></svg>
<svg style="left:905px;top:66px" width="16" height="14" viewBox="0 0 16 14"><rect x="0.5" y="0.5" width="14.5" height="12.5" fill="#008000" stroke="#000" stroke-width="1"/><rect x="7" y="1" width="7.5" height="11.5" fill="#ff00ff"/><path d="M7 1 V13" stroke="#000"/></svg>
<svg style="left:925px;top:66px" width="16" height="14" viewBox="0 0 16 14"><rect x="0.5" y="0.5" width="14.5" height="12.5" fill="#008000" stroke="#000" stroke-width="1"/><rect x="1" y="1" width="13.5" height="5" fill="#ff00ff"/><path d="M1 6.5 H15" stroke="#000"/></svg>
<svg style="left:945px;top:66px" width="16" height="14" viewBox="0 0 16 14"><rect x="0.5" y="0.5" width="14.5" height="12.5" fill="#008000" stroke="#000" stroke-width="1"/></svg>
<div class="t" style="left:989.5px;top:67px;font:bold 12px Liberation Sans,sans-serif;color:#800080;transform:translateX(-50%);">Pers</div>
<div class="b" style="left:1008px;top:64px;width:18px;height:16px;line-height:16px;background:#fafafa;box-shadow:inset 2px 2px 0 #6e6e6e;color:#000;font-size:11px;"><span style="position:relative;top:1.5px;left:1px;">Pt</span></div>
<div class="b" style="left:1030px;top:64px;width:18px;height:16px;line-height:16px;background:#fafafa;box-shadow:inset 2px 2px 0 #6e6e6e;color:#000;font-size:11px;"><span style="position:relative;top:1.5px;left:1px;">Ln</span></div>
<div class="b" style="left:1052px;top:64px;width:19px;height:16px;line-height:16px;background:#f0f0f0;box-shadow:inset 1px 1px 0 #fff, inset -1px -1px 0 #a8a8a8;color:#000;font-size:11px;"><span style="">Fc</span></div>
<div style="position:absolute;left:1052px;top:64px;width:19px;height:16px;box-shadow:inset -1px -1px 0 #696969, inset -2px -2px 0 #a8a8a8;"></div>
<div class="b" style="left:1074px;top:64px;width:18px;height:16px;line-height:16px;background:#fafafa;box-shadow:inset 2px 2px 0 #6e6e6e;color:#000;font-size:11px;"><span style="position:relative;top:1.5px;left:1px;">Si</span></div>
<div class="b" style="left:1096px;top:64px;width:19px;height:16px;line-height:16px;background:#f0f0f0;box-shadow:inset 1px 1px 0 #fff, inset -1px -1px 0 #a8a8a8;color:#000;font-size:11px;"><span style="">Fr</span></div>
<div style="position:absolute;left:1096px;top:64px;width:19px;height:16px;box-shadow:inset -1px -1px 0 #696969, inset -2px -2px 0 #a8a8a8;"></div>
<div class="b" style="left:1119px;top:64px;width:28px;height:16px;line-height:16px;background:#fafafa;box-shadow:inset 2px 2px 0 #6e6e6e;color:#000;font-size:11px;"><span style="position:relative;top:1.5px;left:1px;">Img</span></div>
<svg style="left:1682px;top:64px" width="18" height="18" viewBox="0 0 18 18"><path d="M10.5 10.5 L15.5 15.5" stroke="#6b6b00" stroke-width="4.2" stroke-linecap="square"/><path d="M10.5 10.5 L15.5 15.5" stroke="#ffff40" stroke-width="2.2" stroke-linecap="square"/><circle cx="7" cy="6.5" r="5.6" fill="#ffff40" stroke="#6b6b00" stroke-width="1"/><circle cx="7" cy="6.5" r="3.4" fill="#30f0ff" stroke="#0a6a4a" stroke-width="0.8"/></svg>
<svg style="left:1702px;top:64px" width="18" height="18" viewBox="0 0 18 18"><polygon points="8.5,0.5 16.5,8.5 8.5,16.5 0.5,8.5" fill="#18f018" stroke="#0a5a0a" stroke-width="1"/><path d="M5.2 6.8 a1.3 1.3 0 1 1 1.6 -1.6 M11.8 6.8 a1.3 1.3 0 1 0 -1.6 -1.6 M5.2 10.2 a1.3 1.3 0 1 0 1.6 1.6 M11.8 10.2 a1.3 1.3 0 1 1 -1.6 1.6" stroke="#0a4a0a" stroke-width="0.9" fill="none"/><circle cx="8.5" cy="8.5" r="0.6" fill="#0a4a0a"/></svg>
<svg style="left:1723px;top:65px" width="17" height="17" viewBox="0 0 17 17"><path d="M5.8 6.2 C5.4 1.6, 10.6 0.2, 10.6 3.6 L9.9 6.2" stroke="#6a006a" stroke-width="3.6" fill="none"/><polygon points="0.3,7.2 3.8,3.6 3.8,6.0 12.6,6.0 12.6,3.6 15.7,7.2 12.6,10.8 12.6,8.4 9.2,8.4 9.2,12 11.4,12 8,15.6 4.6,12 6.8,12 6.8,8.4 3.8,8.4 3.8,10.8" fill="#f414f4" stroke="#6a006a" stroke-width="0.9"/><path d="M5.8 6.2 C5.4 1.6, 10.6 0.2, 10.6 3.6 L9.9 6.2" stroke="#f414f4" stroke-width="1.9" fill="none"/></svg>
<div style="position:absolute;left:1767px;top:66px;width:13px;height:11px;background:#ff00ff;border:1px solid #000;"></div>
<div class="t" style="left:167.5px;top:557px;font:bold 12px Liberation Sans,sans-serif;color:#0000e0;transform:translateX(-50%);">Front</div>
<div class="b" style="left:186px;top:554px;width:18px;height:16px;line-height:16px;background:#fafafa;box-shadow:inset 2px 2px 0 #6e6e6e;color:#000;font-size:11px;"><span style="position:relative;top:1.5px;left:1px;">Pt</span></div>
<div class="b" style="left:208px;top:554px;width:18px;height:16px;line-height:16px;background:#fafafa;box-shadow:inset 2px 2px 0 #6e6e6e;color:#000;font-size:11px;"><span style="position:relative;top:1.5px;left:1px;">Ln</span></div>
<div class="b" style="left:230px;top:554px;width:19px;height:16px;line-height:16px;background:#f0f0f0;box-shadow:inset 1px 1px 0 #fff, inset -1px -1px 0 #a8a8a8;color:#000;font-size:11px;"><span style="">Fc</span></div>
<div style="position:absolute;left:230px;top:554px;width:19px;height:16px;box-shadow:inset -1px -1px 0 #696969, inset -2px -2px 0 #a8a8a8;"></div>
<div class="b" style="left:252px;top:554px;width:18px;height:16px;line-height:16px;background:#fafafa;box-shadow:inset 2px 2px 0 #6e6e6e;color:#000;font-size:11px;"><span style="position:relative;top:1.5px;left:1px;">Si</span></div>
<div class="b" style="left:274px;top:554px;width:19px;height:16px;line-height:16px;background:#f0f0f0;box-shadow:inset 1px 1px 0 #fff, inset -1px -1px 0 #a8a8a8;color:#000;font-size:11px;"><span style="">Fr</span></div>
<div style="position:absolute;left:274px;top:554px;width:19px;height:16px;box-shadow:inset -1px -1px 0 #696969, inset -2px -2px 0 #a8a8a8;"></div>
<div class="b" style="left:297px;top:554px;width:28px;height:16px;line-height:16px;background:#fafafa;box-shadow:inset 2px 2px 0 #6e6e6e;color:#000;font-size:11px;"><span style="position:relative;top:1.5px;left:1px;">Img</span></div>
<svg style="left:860px;top:554px" width="18" height="18" viewBox="0 0 18 18"><path d="M10.5 10.5 L15.5 15.5" stroke="#6b6b00" stroke-width="4.2" stroke-linecap="square"/><path d="M10.5 10.5 L15.5 15.5" stroke="#ffff40" stroke-width="2.2" stroke-linecap="square"/><circle cx="7" cy="6.5" r="5.6" fill="#ffff40" stroke="#6b6b00" stroke-width="1"/><circle cx="7" cy="6.5" r="3.4" fill="#30f0ff" stroke="#0a6a4a" stroke-width="0.8"/></svg>
<svg style="left:880px;top:554px" width="18" height="18" viewBox="0 0 18 18"><polygon points="8.5,0.5 16.5,8.5 8.5,16.5 0.5,8.5" fill="#18f018" stroke="#0a5a0a" stroke-width="1"/><path d="M5.2 6.8 a1.3 1.3 0 1 1 1.6 -1.6 M11.8 6.8 a1.3 1.3 0 1 0 -1.6 -1.6 M5.2 10.2 a1.3 1.3 0 1 0 1.6 1.6 M11.8 10.2 a1.3 1.3 0 1 1 -1.6 1.6" stroke="#0a4a0a" stroke-width="0.9" fill="none"/><circle cx="8.5" cy="8.5" r="0.6" fill="#0a4a0a"/></svg>
<svg style="left:905px;top:556px" width="16" height="14" viewBox="0 0 16 14"><rect x="0.5" y="0.5" width="14.5" height="12.5" fill="#0000ff" stroke="#000" stroke-width="1"/><rect x="7" y="1" width="7.5" height="11.5" fill="#ff00ff"/><path d="M7 1 V13" stroke="#000"/></svg>
<svg style="left:925px;top:556px" width="16" height="14" viewBox="0 0 16 14"><rect x="0.5" y="0.5" width="14.5" height="12.5" fill="#0000ff" stroke="#000" stroke-width="1"/><rect x="1" y="1" width="13.5" height="5" fill="#ff00ff"/><path d="M1 6.5 H15" stroke="#000"/></svg>
<svg style="left:945px;top:556px" width="16" height="14" viewBox="0 0 16 14"><rect x="0.5" y="0.5" width="14.5" height="12.5" fill="#0000ff" stroke="#000" stroke-width="1"/></svg>
<div class="t" style="left:989.5px;top:557px;font:bold 12px Liberation Sans,sans-serif;color:#e00000;transform:translateX(-50%);">Left</div>
<div class="b" style="left:1008px;top:554px;width:18px;height:16px;line-height:16px;background:#fafafa;box-shadow:inset 2px 2px 0 #6e6e6e;color:#000;font-size:11px;"><span style="position:relative;top:1.5px;left:1px;">Pt</span></div>
<div class="b" style="left:1030px;top:554px;width:18px;height:16px;line-height:16px;background:#fafafa;box-shadow:inset 2px 2px 0 #6e6e6e;color:#000;font-size:11px;"><span style="position:relative;top:1.5px;left:1px;">Ln</span></div>
<div class="b" style="left:1052px;top:554px;width:19px;height:16px;line-height:16px;background:#f0f0f0;box-shadow:inset 1px 1px 0 #fff, inset -1px -1px 0 #a8a8a8;color:#000;font-size:11px;"><span style="">Fc</span></div>
<div style="position:absolute;left:1052px;top:554px;width:19px;height:16px;box-shadow:inset -1px -1px 0 #696969, inset -2px -2px 0 #a8a8a8;"></div>
<div class="b" style="left:1074px;top:554px;width:18px;height:16px;line-height:16px;background:#fafafa;box-shadow:inset 2px 2px 0 #6e6e6e;color:#000;font-size:11px;"><span style="position:relative;top:1.5px;left:1px;">Si</span></div>
<div class="b" style="left:1096px;top:554px;width:19px;height:16px;line-height:16px;background:#f0f0f0;box-shadow:inset 1px 1px 0 #fff, inset -1px -1px 0 #a8a8a8;color:#000;font-size:11px;"><span style="">Fr</span></div>
<div style="position:absolute;left:1096px;top:554px;width:19px;height:16px;box-shadow:inset -1px -1px 0 #696969, inset -2px -2px 0 #a8a8a8;"></div>
<div class="b" style="left:1119px;top:554px;width:28px;height:16px;line-height:16px;background:#fafafa;box-shadow:inset 2px 2px 0 #6e6e6e;color:#000;font-size:11px;"><span style="position:relative;top:1.5px;left:1px;">Img</span></div>
<svg style="left:1682px;top:554px" width="18" height="18" viewBox="0 0 18 18"><path d="M10.5 10.5 L15.5 15.5" stroke="#6b6b00" stroke-width="4.2" stroke-linecap="square"/><path d="M10.5 10.5 L15.5 15.5" stroke="#ffff40" stroke-width="2.2" stroke-linecap="square"/><circle cx="7" cy="6.5" r="5.6" fill="#ffff40" stroke="#6b6b00" stroke-width="1"/><circle cx="7" cy="6.5" r="3.4" fill="#30f0ff" stroke="#0a6a4a" stroke-width="0.8"/></svg>
<svg style="left:1702px;top:554px" width="18" height="18" viewBox="0 0 18 18"><polygon points="8.5,0.5 16.5,8.5 8.5,16.5 0.5,8.5" fill="#18f018" stroke="#0a5a0a" stroke-width="1"/><path d="M5.2 6.8 a1.3 1.3 0 1 1 1.6 -1.6 M11.8 6.8 a1.3 1.3 0 1 0 -1.6 -1.6 M5.2 10.2 a1.3 1.3 0 1 0 1.6 1.6 M11.8 10.2 a1.3 1.3 0 1 1 -1.6 1.6" stroke="#0a4a0a" stroke-width="0.9" fill="none"/><circle cx="8.5" cy="8.5" r="0.6" fill="#0a4a0a"/></svg>
<svg style="left:1727px;top:556px" width="16" height="14" viewBox="0 0 16 14"><rect x="0.5" y="0.5" width="14.5" height="12.5" fill="#ff0000" stroke="#000" stroke-width="1"/><rect x="7" y="1" width="7.5" height="11.5" fill="#ff00ff"/><path d="M7 1 V13" stroke="#000"/></svg>
<svg style="left:1747px;top:556px" width="16" height="14" viewBox="0 0 16 14"><rect x="0.5" y="0.5" width="14.5" height="12.5" fill="#ff0000" stroke="#000" stroke-width="1"/><rect x="1" y="1" width="13.5" height="5" fill="#ff00ff"/><path d="M1 6.5 H15" stroke="#000"/></svg>
<svg style="left:1767px;top:556px" width="16" height="14" viewBox="0 0 16 14"><rect x="0.5" y="0.5" width="14.5" height="12.5" fill="#ff0000" stroke="#000" stroke-width="1"/></svg>
<div style="position:absolute;left:1789px;top:61px;width:131px;height:968px;background:#f0f0f0;"></div>
<div style="position:absolute;left:1793px;top:66px;width:114px;height:1px;background:#a0a0a0;"></div>
<div style="position:absolute;left:1793px;top:67px;width:114px;height:1px;background:#fff;"></div>
<div style="position:absolute;left:1793px;top:69px;width:114px;height:1px;background:#a0a0a0;"></div>
<div style="position:absolute;left:1793px;top:70px;width:114px;height:1px;background:#fff;"></div>
<div class="b" style="left:1909px;top:62px;width:11px;height:10px;line-height:10px;background:#f0f0f0;box-shadow:inset 1px 1px 0 #fff, inset -1px -1px 0 #a8a8a8;color:#000;font-size:11px;"><span style=""></span></div>
<div style="position:absolute;left:1909px;top:62px;width:11px;height:10px;box-shadow:inset -1px -1px 0 #696969, inset -2px -2px 0 #a8a8a8;"></div>
<svg style="left:1909px;top:62px" width="11" height="10"><path d="M3 2 L8.5 7.5 M8.5 2 L3 7.5" stroke="#000" stroke-width="1.1"/></svg>
<div class="b" style="left:1793px;top:74px;width:38px;height:14px;line-height:14px;background:#f0f0f0;box-shadow:inset 1px 1px 0 #fff, inset -1px -1px 0 #a8a8a8;color:#000;font-size:11px;"><span style="">New</span></div>
<div class="b" style="left:1832px;top:74px;width:39px;height:14px;line-height:14px;background:#f0f0f0;box-shadow:inset 1px 1px 0 #fff, inset -1px -1px 0 #a8a8a8;color:#000;font-size:11px;"><span style="">Clone</span></div>
<div class="b" style="left:1872px;top:74px;width:39px;height:14px;line-height:14px;background:#f0f0f0;box-shadow:inset 1px 1px 0 #fff, inset -1px -1px 0 #a8a8a8;color:#000;font-size:11px;"><span style="">Delete</span></div>
<div style="position:absolute;left:1793px;top:74px;width:118px;height:14px;box-shadow:inset -1px -1px 0 #696969, inset -2px -2px 0 #a8a8a8;"></div>
<div class="b" style="left:1793px;top:88px;width:38px;height:16px;line-height:16px;background:#f0f0f0;box-shadow:inset 1px 1px 0 #fff, inset -1px -1px 0 #a8a8a8;color:#000;font-size:11px;"><span style="">Prop</span></div>
<div class="b" style="left:1832px;top:88px;width:19px;height:16px;line-height:16px;background:#f0f0f0;box-shadow:inset 1px 1px 0 #fff, inset -1px -1px 0 #a8a8a8;color:#000;font-size:11px;"><span style="">&lt;</span></div>
<div class="b" style="left:1852px;top:88px;width:19px;height:16px;line-height:16px;background:#f0f0f0;box-shadow:inset 1px 1px 0 #fff, inset -1px -1px 0 #a8a8a8;color:#000;font-size:11px;"><span style="">&gt;</span></div>
<div class="b" style="left:1872px;top:88px;width:39px;height:16px;line-height:16px;background:#f0f0f0;box-shadow:inset 1px 1px 0 #fff, inset -1px -1px 0 #a8a8a8;color:#000;font-size:11px;"><span style="">Misc</span></div>
<div style="position:absolute;left:1793px;top:88px;width:118px;height:16px;box-shadow:inset -1px -1px 0 #696969, inset -2px -2px 0 #a8a8a8;"></div>
<div style="position:absolute;left:1792px;top:105px;width:128px;height:444px;background:#fff;box-shadow:inset 2px 2px 0 #7a7a7a;"></div>
<div style="position:absolute;left:1813px;top:106px;width:5px;height:20px;background:#f0f0f0;"></div>
<div style="position:absolute;left:1835px;top:106px;width:3px;height:20px;background:#f0f0f0;"></div>
<div style="position:absolute;left:1797px;top:110px;width:16px;height:16px;background:#fff;box-shadow:inset -1px -1px 0 #000;"></div>
<div style="position:absolute;left:1819px;top:110px;width:16px;height:16px;background:#fff;box-shadow:inset -1px -1px 0 #000;"></div>
<svg style="left:1842px;top:114px" width="11" height="7"><polygon points="1,1 10,1 5.5,6" fill="none" stroke="#999"/></svg>
<div class="t" style="left:1858px;top:112px;font:11.5px 'Liberation Sans',sans-serif;color:#000;">obj1</div>
<div style="position:absolute;left:1813px;top:126px;width:5px;height:20px;background:#f0f0f0;"></div>
<div style="position:absolute;left:1835px;top:126px;width:3px;height:20px;background:#f0f0f0;"></div>
<div style="position:absolute;left:1797px;top:130px;width:16px;height:16px;background:#fff;box-shadow:inset -1px -1px 0 #000;"></div>
<div style="position:absolute;left:1819px;top:130px;width:16px;height:16px;background:#fff;box-shadow:inset -1px -1px 0 #000;"></div>
<svg style="left:1797px;top:130px" width="16" height="16" viewBox="0 0 16 16"><path d="M1.5 6 Q8 1 14.5 6" stroke="#000" stroke-width="1" fill="none"/><path d="M4 3.8 L3.3 2.8 M8 2.6 V1.6 M12 3.8 L12.7 2.8" stroke="#000" stroke-width="0.8"/><ellipse cx="8" cy="9.5" rx="3.2" ry="4" fill="#000"/><circle cx="7.3" cy="8.2" r="1.1" fill="#fff"/></svg>
<svg style="left:1844px;top:132px" width="8" height="12"><polygon points="1,1 6.5,6 1,11" fill="none" stroke="#999"/></svg>
<div class="t" style="left:1858px;top:132px;font:11.5px 'Liberation Sans',sans-serif;color:#000;">car</div>
<div style="position:absolute;left:1813px;top:147px;width:5px;height:20px;background:#f0f0f0;"></div>
<div style="position:absolute;left:1835px;top:147px;width:3px;height:20px;background:#f0f0f0;"></div>
<div style="position:absolute;left:1797px;top:151px;width:16px;height:16px;background:#fff;box-shadow:inset -1px -1px 0 #000;"></div>
<div style="position:absolute;left:1819px;top:151px;width:16px;height:16px;background:#fff;box-shadow:inset -1px -1px 0 #000;"></div>
<svg style="left:1797px;top:151px" width="16" height="16" viewBox="0 0 16 16"><path d="M1.5 6 Q8 1 14.5 6" stroke="#000" stroke-width="1" fill="none"/><path d="M4 3.8 L3.3 2.8 M8 2.6 V1.6 M12 3.8 L12.7 2.8" stroke="#000" stroke-width="0.8"/><ellipse cx="8" cy="9.5" rx="3.2" ry="4" fill="#000"/><circle cx="7.3" cy="8.2" r="1.1" fill="#fff"/></svg>
<div style="position:absolute;left:1838px;top:148px;width:80px;height:19px;background:#0078d7;"></div>
<div style="position:absolute;left:1794px;top:148px;width:124px;height:19px;outline:1px dotted #000;outline-offset:-1px;"></div>
<svg style="left:1844px;top:153px" width="8" height="12"><polygon points="1,1 6.5,6 1,11" fill="#fff" stroke="#fff"/></svg>
<div class="t" style="left:1858px;top:153px;font:11.5px 'Liberation Sans',sans-serif;color:#fff;">wing</div>
<div style="position:absolute;left:1789px;top:549px;width:131px;height:2px;background:#fbfbfb;"></div>
<div style="position:absolute;left:1793px;top:554px;width:114px;height:1px;background:#a0a0a0;"></div>
<div style="position:absolute;left:1793px;top:555px;width:114px;height:1px;background:#fff;"></div>
<div style="position:absolute;left:1793px;top:557px;width:114px;height:1px;background:#a0a0a0;"></div>
<div style="position:absolute;left:1793px;top:558px;width:114px;height:1px;background:#fff;"></div>
<div class="b" style="left:1909px;top:551px;width:11px;height:10px;line-height:10px;background:#f0f0f0;box-shadow:inset 1px 1px 0 #fff, inset -1px -1px 0 #a8a8a8;color:#000;font-size:11px;"><span style=""></span></div>
<div style="position:absolute;left:1909px;top:551px;width:11px;height:10px;box-shadow:inset -1px -1px 0 #696969, inset -2px -2px 0 #a8a8a8;"></div>
<svg style="left:1909px;top:551px" width="11" height="10"><path d="M3 2 L8.5 7.5 M8.5 2 L3 7.5" stroke="#000" stroke-width="1.1"/></svg>
<div class="b" style="left:1793px;top:563px;width:38px;height:14px;line-height:14px;background:#f0f0f0;box-shadow:inset 1px 1px 0 #fff, inset -1px -1px 0 #a8a8a8;color:#000;font-size:11px;"><span style="">New</span></div>
<div class="b" style="left:1832px;top:563px;width:39px;height:14px;line-height:14px;background:#f0f0f0;box-shadow:inset 1px 1px 0 #fff, inset -1px -1px 0 #a8a8a8;color:#000;font-size:11px;"><span style="">Clone</span></div>
<div class="b" style="left:1872px;top:563px;width:39px;height:14px;line-height:14px;background:#f0f0f0;box-shadow:inset 1px 1px 0 #fff, inset -1px -1px 0 #a8a8a8;color:#000;font-size:11px;"><span style="">Delete</span></div>
<div style="position:absolute;left:1793px;top:563px;width:118px;height:14px;box-shadow:inset -1px -1px 0 #696969, inset -2px -2px 0 #a8a8a8;"></div>
<div class="b" style="left:1793px;top:577px;width:38px;height:16px;line-height:16px;background:#f0f0f0;box-shadow:inset 1px 1px 0 #fff, inset -1px -1px 0 #a8a8a8;color:#000;font-size:11px;"><span style="">Prop</span></div>
<div style="position:absolute;left:1793px;top:577px;width:38px;height:16px;box-shadow:inset -1px -1px 0 #696969, inset -2px -2px 0 #a8a8a8;"></div>
<div class="b" style="left:1872px;top:577px;width:39px;height:16px;line-height:16px;background:#f0f0f0;box-shadow:inset 1px 1px 0 #fff, inset -1px -1px 0 #a8a8a8;color:#000;font-size:11px;"><span style="">Misc</span></div>
<div style="position:absolute;left:1872px;top:577px;width:39px;height:16px;box-shadow:inset -1px -1px 0 #696969, inset -2px -2px 0 #a8a8a8;"></div>
<div style="position:absolute;left:1792px;top:594px;width:128px;height:435px;background:#fff;box-shadow:inset 2px 2px 0 #7a7a7a;"></div>
<div style="position:absolute;left:1794px;top:616px;width:124px;height:20px;background:#0078d7;"></div>
<div style="position:absolute;left:1796px;top:598px;width:16px;height:16px;background:#fff;border:1px solid #000;box-sizing:border-box;"></div>
<div class="t" style="left:1818px;top:600px;font:11.5px 'Liberation Sans',sans-serif;color:#000;">top1</div>
<div style="position:absolute;left:1796px;top:618px;width:16px;height:16px;background:#fff;border:1px solid #000;box-sizing:border-box;"></div>
<div class="t" style="left:1818px;top:620px;font:11.5px 'Liberation Sans',sans-serif;color:#fff;">side1</div>
<svg style="left:147px;top:83px" width="818" height="466" viewBox="147 83 818 466">
<path d="M469.5 197.5V372.5M469.5 197.5H645.5M478.5 197.5V372.5M469.5 206.5H645.5M487.5 197.5V372.5M469.5 215.5H645.5M495.5 197.5V372.5M469.5 223.5H645.5M504.5 197.5V372.5M469.5 232.5H645.5M513.5 197.5V372.5M469.5 241.5H645.5M522.5 197.5V372.5M469.5 250.5H645.5M531.5 197.5V372.5M469.5 258.5H645.5M539.5 197.5V372.5M469.5 267.5H645.5M548.5 197.5V372.5M469.5 276.5H645.5M557.5 197.5V372.5M469.5 285.5H645.5M566.5 197.5V372.5M469.5 293.5H645.5M575.5 197.5V372.5M469.5 302.5H645.5M583.5 197.5V372.5M469.5 311.5H645.5M592.5 197.5V372.5M469.5 320.5H645.5M601.5 197.5V372.5M469.5 328.5H645.5M610.5 197.5V372.5M469.5 337.5H645.5M619.5 197.5V372.5M469.5 346.5H645.5M627.5 197.5V372.5M469.5 355.5H645.5M636.5 197.5V372.5M469.5 363.5H645.5M645.5 197.5V372.5M469.5 372.5H645.5" stroke="#7a9888" stroke-width="1" fill="none" shape-rendering="crispEdges"/>
<path d="M177.5 241.5L194.5 175.5M194.5 175.5L220.5 139.5M220.5 139.5L257.5 119.5M257.5 119.5L385.5 119.5M385.5 119.5L446.5 134.5M385.5 119.5L446.5 142.5M446.5 134.5L555.5 134.5M446.5 142.5L555.5 134.5M446.5 142.5L555.5 183.5M555.5 134.5L659.5 134.5M659.5 134.5L715.5 119.5M715.5 119.5L785.5 119.5M785.5 119.5L913.5 140.5M659.5 134.5L715.5 148.5M715.5 148.5L785.5 152.5M715.5 119.5L715.5 148.5M785.5 119.5L785.5 152.5M715.5 148.5L725.5 185.5M785.5 152.5L725.5 185.5M785.5 152.5L913.5 177.5M785.5 152.5L913.5 204.5M913.5 177.5L937.5 204.5M555.5 183.5L659.5 183.5M659.5 183.5L725.5 185.5M725.5 185.5L913.5 204.5M913.5 204.5L937.5 204.5M177.5 328.5L194.5 394.5M194.5 394.5L220.5 430.5M220.5 430.5L257.5 450.5M257.5 450.5L385.5 450.5M385.5 450.5L446.5 435.5M385.5 450.5L446.5 427.5M446.5 435.5L555.5 435.5M446.5 427.5L555.5 435.5M446.5 427.5L555.5 386.5M555.5 435.5L659.5 435.5M659.5 435.5L715.5 450.5M715.5 450.5L785.5 450.5M785.5 450.5L913.5 429.5M659.5 435.5L715.5 421.5M715.5 421.5L785.5 417.5M715.5 450.5L715.5 421.5M785.5 450.5L785.5 417.5M715.5 421.5L725.5 384.5M785.5 417.5L725.5 384.5M785.5 417.5L913.5 392.5M785.5 417.5L913.5 365.5M913.5 392.5L937.5 365.5M555.5 386.5L659.5 386.5M659.5 386.5L725.5 384.5M725.5 384.5L913.5 365.5M913.5 365.5L937.5 365.5M177.5 241.5L177.5 328.5M194.5 175.5L194.5 394.5M220.5 139.5L220.5 430.5M257.5 119.5L257.5 450.5M385.5 119.5L385.5 450.5M446.5 134.5L446.5 435.5M555.5 134.5L555.5 435.5M659.5 134.5L659.5 435.5M725.5 185.5L725.5 384.5M913.5 140.5L913.5 429.5M937.5 204.5L937.5 365.5M177.5 284.5L937.5 284.5" stroke="#dc9ad0" stroke-width="1.2" fill="none" shape-rendering="crispEdges"/>
<path d="M555.5 284.5L555.5 385.5" stroke="#2828ff" stroke-width="1.3" fill="none" shape-rendering="crispEdges"/>
<path d="M175 239h5v5h-5zM192 173h5v5h-5zM218 137h5v5h-5zM255 117h5v5h-5zM383 117h5v5h-5zM444 132h5v5h-5zM444 140h5v5h-5zM553 132h5v5h-5zM553 181h5v5h-5zM657 132h5v5h-5zM657 181h5v5h-5zM713 117h5v5h-5zM783 117h5v5h-5zM911 138h5v5h-5zM713 146h5v5h-5zM783 150h5v5h-5zM911 175h5v5h-5zM723 183h5v5h-5zM175 326h5v5h-5zM192 392h5v5h-5zM218 428h5v5h-5zM255 448h5v5h-5zM383 448h5v5h-5zM444 433h5v5h-5zM444 425h5v5h-5zM553 433h5v5h-5zM553 384h5v5h-5zM657 433h5v5h-5zM657 384h5v5h-5zM713 448h5v5h-5zM783 448h5v5h-5zM911 427h5v5h-5zM713 419h5v5h-5zM783 415h5v5h-5zM911 390h5v5h-5zM723 382h5v5h-5zM911 363h5v5h-5zM935 363h5v5h-5zM175 282h5v5h-5zM192 282h5v5h-5zM218 282h5v5h-5zM255 282h5v5h-5zM383 282h5v5h-5zM444 282h5v5h-5zM553 282h5v5h-5zM657 282h5v5h-5zM723 282h5v5h-5zM911 282h5v5h-5zM935 282h5v5h-5z" fill="#e88cc6"/>
<path d="M911 202h5v5h-5zM935 202h5v5h-5z" fill="#7fe0b0"/>
</svg>
<svg style="left:147px;top:573px" width="818" height="456" viewBox="147 573 818 456">
<path d="M469.5 712.5V888.5M469.5 712.5H645.5M478.5 712.5V888.5M469.5 721.5H645.5M487.5 712.5V888.5M469.5 730.5H645.5M495.5 712.5V888.5M469.5 738.5H645.5M504.5 712.5V888.5M469.5 747.5H645.5M513.5 712.5V888.5M469.5 756.5H645.5M522.5 712.5V888.5M469.5 765.5H645.5M531.5 712.5V888.5M469.5 774.5H645.5M539.5 712.5V888.5M469.5 782.5H645.5M548.5 712.5V888.5M469.5 791.5H645.5M557.5 712.5V888.5M469.5 800.5H645.5M566.5 712.5V888.5M469.5 809.5H645.5M575.5 712.5V888.5M469.5 818.5H645.5M583.5 712.5V888.5M469.5 826.5H645.5M592.5 712.5V888.5M469.5 835.5H645.5M601.5 712.5V888.5M469.5 844.5H645.5M610.5 712.5V888.5M469.5 853.5H645.5M619.5 712.5V888.5M469.5 862.5H645.5M627.5 712.5V888.5M469.5 870.5H645.5M636.5 712.5V888.5M469.5 879.5H645.5M645.5 712.5V888.5M469.5 888.5H645.5" stroke="#8aa0bc" stroke-width="1" fill="none" shape-rendering="crispEdges"/>
<path d="M178.5 828.5L195.5 808.5M195.5 808.5L221.5 793.5M221.5 793.5L257.5 781.5M257.5 781.5L386.5 761.5M386.5 761.5L446.5 756.5M446.5 756.5L554.5 693.5M554.5 693.5L658.5 690.5M658.5 690.5L724.5 701.5M724.5 701.5L913.5 768.5M386.5 761.5L446.5 768.5M446.5 768.5L554.5 768.5M446.5 756.5L554.5 768.5M554.5 768.5L936.5 768.5M724.5 701.5L714.5 768.5M724.5 701.5L784.5 768.5M784.5 768.5L913.5 742.5M913.5 742.5L936.5 742.5M913.5 768.5L936.5 742.5M178.5 910.5L936.5 910.5M178.5 828.5L178.5 910.5M195.5 808.5L195.5 910.5M221.5 793.5L221.5 910.5M257.5 781.5L257.5 910.5M386.5 761.5L386.5 910.5M446.5 756.5L446.5 910.5M554.5 693.5L554.5 910.5M658.5 690.5L658.5 910.5M714.5 768.5L714.5 910.5M784.5 768.5L784.5 910.5M913.5 742.5L913.5 910.5M936.5 742.5L936.5 910.5" stroke="#dc9ad0" stroke-width="1.2" fill="none" shape-rendering="crispEdges"/>
<path d="M555.5 693.5L555.5 800.5" stroke="#10c010" stroke-width="1" fill="none" shape-rendering="crispEdges"/>
<path d="M555.5 800.5L662.5 800.5" stroke="#b83040" stroke-width="1.3" fill="none" shape-rendering="crispEdges"/>
<path d="M176 826h5v5h-5zM193 806h5v5h-5zM219 791h5v5h-5zM255 779h5v5h-5zM384 759h5v5h-5zM444 754h5v5h-5zM552 691h5v5h-5zM656 688h5v5h-5zM722 699h5v5h-5zM444 766h5v5h-5zM552 766h5v5h-5zM656 766h5v5h-5zM712 766h5v5h-5zM782 766h5v5h-5zM911 766h5v5h-5zM934 766h5v5h-5zM911 740h5v5h-5zM934 740h5v5h-5zM176 908h5v5h-5zM193 908h5v5h-5zM219 908h5v5h-5zM255 908h5v5h-5zM384 908h5v5h-5zM444 908h5v5h-5zM552 908h5v5h-5zM656 908h5v5h-5zM712 908h5v5h-5zM782 908h5v5h-5zM911 908h5v5h-5zM934 908h5v5h-5z" fill="#e88cc6"/>
</svg>
<svg style="left:969px;top:573px" width="818" height="456" viewBox="969 573 818 456">
<path d="M1322.5 712.5V888.5M1322.5 712.5H1498.5M1331.5 712.5V888.5M1322.5 721.5H1498.5M1340.5 712.5V888.5M1322.5 730.5H1498.5M1348.5 712.5V888.5M1322.5 738.5H1498.5M1357.5 712.5V888.5M1322.5 747.5H1498.5M1366.5 712.5V888.5M1322.5 756.5H1498.5M1375.5 712.5V888.5M1322.5 765.5H1498.5M1384.5 712.5V888.5M1322.5 774.5H1498.5M1392.5 712.5V888.5M1322.5 782.5H1498.5M1401.5 712.5V888.5M1322.5 791.5H1498.5M1410.5 712.5V888.5M1322.5 800.5H1498.5M1419.5 712.5V888.5M1322.5 809.5H1498.5M1428.5 712.5V888.5M1322.5 818.5H1498.5M1436.5 712.5V888.5M1322.5 826.5H1498.5M1445.5 712.5V888.5M1322.5 835.5H1498.5M1454.5 712.5V888.5M1322.5 844.5H1498.5M1463.5 712.5V888.5M1322.5 853.5H1498.5M1472.5 712.5V888.5M1322.5 862.5H1498.5M1480.5 712.5V888.5M1322.5 870.5H1498.5M1489.5 712.5V888.5M1322.5 879.5H1498.5M1498.5 712.5V888.5M1322.5 888.5H1498.5" stroke="#9a8488" stroke-width="1" fill="none" shape-rendering="crispEdges"/>
<path d="M1308.5 691.5L1268.5 756.5M1308.5 693.5L1260.5 768.5M1310.5 701.5L1273.5 768.5M1310.5 701.5L1278.5 768.5M1310.5 701.5L1329.5 768.5M1244.5 761.5L1260.5 768.5M1303.5 742.5L1273.5 768.5M1303.5 742.5L1329.5 768.5M1244.5 761.5L1268.5 756.5M1268.5 756.5L1308.5 693.5M1510.5 691.5L1550.5 756.5M1510.5 693.5L1558.5 768.5M1508.5 701.5L1545.5 768.5M1508.5 701.5L1540.5 768.5M1508.5 701.5L1489.5 768.5M1574.5 761.5L1558.5 768.5M1515.5 742.5L1545.5 768.5M1515.5 742.5L1489.5 768.5M1574.5 761.5L1550.5 756.5M1550.5 756.5L1510.5 693.5M1303.5 742.5L1409.5 692.5M1515.5 742.5L1409.5 692.5M1308.5 691.5L1510.5 691.5M1308.5 693.5L1510.5 693.5M1310.5 701.5L1508.5 701.5M1303.5 742.5L1515.5 742.5M1268.5 756.5L1550.5 756.5M1244.5 761.5L1574.5 761.5M1244.5 768.5L1574.5 768.5M1244.5 781.5L1574.5 781.5M1264.5 793.5L1554.5 793.5M1300.5 808.5L1518.5 808.5M1366.5 828.5L1452.5 828.5M1244.5 761.5L1244.5 910.5M1574.5 761.5L1574.5 910.5M1260.5 768.5L1260.5 910.5M1558.5 768.5L1558.5 910.5M1265.5 768.5L1265.5 910.5M1553.5 768.5L1553.5 910.5M1303.5 742.5L1303.5 910.5M1515.5 742.5L1515.5 910.5M1300.5 808.5L1300.5 910.5M1518.5 808.5L1518.5 910.5M1329.5 742.5L1329.5 910.5M1489.5 742.5L1489.5 910.5M1366.5 888.5L1366.5 910.5M1452.5 888.5L1452.5 910.5M1409.5 691.5L1409.5 910.5M1244.5 910.5L1574.5 910.5" stroke="#dc9ad0" stroke-width="1.1" fill="none" shape-rendering="crispEdges"/>
<path d="M1244.5 781.5L1264.5 793.5M1264.5 793.5L1300.5 808.5M1300.5 808.5L1366.5 828.5M1574.5 781.5L1554.5 793.5M1554.5 793.5L1518.5 808.5M1518.5 808.5L1452.5 828.5" stroke="#a898c0" stroke-width="0.9" fill="none" shape-rendering="crispEdges"/>
<path d="M1304.5 800.5L1408.5 800.5" stroke="#1010e0" stroke-width="1.4" fill="none" shape-rendering="crispEdges"/>
<path d="M1306 689h5v5h-5zM1308 699h5v5h-5zM1266 754h5v5h-5zM1242 759h5v5h-5zM1242 766h5v5h-5zM1258 766h5v5h-5zM1263 766h5v5h-5zM1271 766h5v5h-5zM1276 766h5v5h-5zM1301 740h5v5h-5zM1327 740h5v5h-5zM1301 766h5v5h-5zM1327 766h5v5h-5zM1242 779h5v5h-5zM1262 791h5v5h-5zM1298 806h5v5h-5zM1364 826h5v5h-5zM1508 689h5v5h-5zM1506 699h5v5h-5zM1548 754h5v5h-5zM1572 759h5v5h-5zM1572 766h5v5h-5zM1556 766h5v5h-5zM1551 766h5v5h-5zM1543 766h5v5h-5zM1538 766h5v5h-5zM1513 740h5v5h-5zM1487 740h5v5h-5zM1513 766h5v5h-5zM1487 766h5v5h-5zM1572 779h5v5h-5zM1552 791h5v5h-5zM1516 806h5v5h-5zM1450 826h5v5h-5zM1407 689h5v5h-5zM1407 699h5v5h-5zM1407 740h5v5h-5zM1407 754h5v5h-5zM1407 759h5v5h-5zM1407 766h5v5h-5zM1407 779h5v5h-5zM1407 791h5v5h-5zM1407 806h5v5h-5zM1407 826h5v5h-5zM1407 908h5v5h-5zM1242 908h5v5h-5zM1572 908h5v5h-5zM1258 908h5v5h-5zM1556 908h5v5h-5zM1263 908h5v5h-5zM1551 908h5v5h-5zM1298 908h5v5h-5zM1516 908h5v5h-5zM1301 908h5v5h-5zM1513 908h5v5h-5zM1327 908h5v5h-5zM1487 908h5v5h-5zM1364 908h5v5h-5zM1450 908h5v5h-5z" fill="#e88cc6"/>
<path d="M1488 740h5v5h-5zM1488 766h5v5h-5zM1488 908h5v5h-5z" fill="#7fe0b0"/>
</svg>
<svg style="left:969px;top:83px" width="818" height="466" viewBox="969 83 818 466">
<path d="M1284.1 250.2L1357.6 340.0M1284.1 250.2L1407.6 208.8M1290.3 248.1L1363.9 337.4M1287.8 254.7L1411.4 212.8M1296.4 246.1L1370.2 334.8M1291.4 259.2L1415.2 216.7M1302.6 244.0L1376.6 332.2M1295.1 263.7L1419.1 220.7M1308.8 241.9L1382.9 329.6M1298.8 268.2L1422.9 224.6M1315.0 239.8L1389.2 327.0M1302.5 272.6L1426.7 228.6M1321.1 237.8L1395.5 324.4M1306.1 277.1L1430.5 232.6M1327.3 235.7L1401.9 321.8M1309.8 281.6L1434.4 236.5M1333.5 233.6L1408.2 319.2M1313.5 286.1L1438.2 240.5M1339.7 231.6L1414.5 316.6M1317.2 290.6L1442.0 244.4M1345.8 229.5L1420.8 314.0M1320.8 295.1L1445.8 248.4M1352.0 227.4L1427.2 311.4M1324.5 299.6L1449.7 252.4M1358.2 225.4L1433.5 308.8M1328.2 304.1L1453.5 256.3M1364.4 223.3L1439.8 306.2M1331.9 308.6L1457.3 260.3M1370.5 221.2L1446.1 303.6M1335.5 313.1L1461.1 264.2M1376.7 219.2L1452.5 301.0M1339.2 317.6L1465.0 268.2M1382.9 217.1L1458.8 298.4M1342.9 322.0L1468.8 272.2M1389.1 215.0L1465.1 295.8M1346.6 326.5L1472.6 276.1M1395.2 212.9L1471.4 293.2M1350.2 331.0L1476.4 280.1M1401.4 210.9L1477.8 290.6M1353.9 335.5L1480.3 284.0M1407.6 208.8L1484.1 288.0M1357.6 340.0L1484.1 288.0" stroke="#7a9880" stroke-width="0.9" fill="none"/>
<path d="M1089.5 261.5L1187.5 215.5M1187.5 215.5L1240.5 207.5M1089.5 261.5L1068.5 289.5M1068.5 289.5L1060.5 324.5M1089.5 261.5L1100.5 344.5M1089.5 261.5L1148.5 342.5M1148.5 342.5L1214.5 433.5M1187.5 215.5L1196.5 309.5M1187.5 215.5L1251.5 292.5M1240.5 207.5L1245.5 301.5M1068.5 289.5L1119.5 362.5M1119.5 362.5L1175.5 442.5M1068.5 289.5L1079.5 364.5M1060.5 324.5L1098.5 380.5M1098.5 380.5L1139.5 441.5M1060.5 324.5L1071.5 375.5M1071.5 375.5L1070.5 389.5M1070.5 389.5L1079.5 428.5M1100.5 344.5L1196.5 309.5M1196.5 309.5L1245.5 301.5M1245.5 301.5L1320.5 273.5M1148.5 342.5L1251.5 292.5M1251.5 292.5L1297.5 271.5M1100.5 344.5L1079.5 364.5M1119.5 362.5L1148.5 342.5M1119.5 362.5L1098.5 380.5M1098.5 380.5L1086.5 398.5M1086.5 398.5L1094.5 451.5M1079.5 428.5L1094.5 451.5M1094.5 451.5L1109.5 474.5M1102.5 422.5L1109.5 474.5M1109.5 474.5L1147.5 506.5M1147.5 506.5L1183.5 518.5M1183.5 518.5L1221.5 518.5M1102.5 422.5L1139.5 441.5M1139.5 441.5L1175.5 442.5M1175.5 442.5L1214.5 433.5M1214.5 433.5L1321.5 378.5M1221.5 518.5L1324.5 475.5M1139.5 441.5L1147.5 506.5M1175.5 442.5L1183.5 518.5M1214.5 433.5L1221.5 518.5M1079.5 364.5L1086.5 398.5M1071.5 375.5L1102.5 422.5M1086.5 398.5L1102.5 422.5M1079.5 364.5L1070.5 389.5M1240.5 207.5L1337.5 153.5M1240.5 207.5L1319.5 183.5M1337.5 153.5L1412.5 126.5M1412.5 126.5L1459.5 119.5M1459.5 119.5L1562.5 103.5M1337.5 153.5L1319.5 183.5M1337.5 153.5L1380.5 198.5M1319.5 183.5L1380.5 198.5M1319.5 183.5L1391.5 158.5M1391.5 158.5L1435.5 151.5M1435.5 151.5L1484.5 136.5M1484.5 136.5L1590.5 127.5M1412.5 126.5L1391.5 158.5M1412.5 126.5L1423.5 139.5M1423.5 139.5L1435.5 151.5M1435.5 151.5L1457.5 169.5M1457.5 169.5L1505.5 215.5M1459.5 119.5L1435.5 151.5M1459.5 119.5L1484.5 136.5M1423.5 139.5L1470.5 122.5M1470.5 122.5L1504.5 160.5M1380.5 198.5L1457.5 169.5M1457.5 169.5L1504.5 160.5M1504.5 160.5L1628.5 159.5M1391.5 158.5L1391.5 248.5M1423.5 139.5L1421.5 228.5M1470.5 122.5L1466.5 212.5M1421.5 228.5L1466.5 212.5M1466.5 212.5L1555.5 191.5M1320.5 273.5L1391.5 248.5M1391.5 248.5L1421.5 228.5M1427.5 246.5L1505.5 215.5M1505.5 215.5L1552.5 204.5M1380.5 198.5L1297.5 271.5M1380.5 198.5L1448.5 322.5M1427.5 246.5L1448.5 322.5M1380.5 198.5L1427.5 246.5M1427.5 246.5L1359.5 342.5M1359.5 342.5L1321.5 378.5M1251.5 292.5L1321.5 378.5M1240.5 207.5L1297.5 271.5M1297.5 271.5L1359.5 342.5M1359.5 342.5L1448.5 322.5M1448.5 322.5L1524.5 292.5M1363.5 355.5L1448.5 322.5M1505.5 215.5L1524.5 292.5M1524.5 292.5L1519.5 383.5M1448.5 322.5L1445.5 414.5M1363.5 355.5L1363.5 447.5M1321.5 378.5L1324.5 475.5M1321.5 378.5L1363.5 355.5M1319.5 183.5L1320.5 273.5M1686.5 311.5L1613.5 355.5M1613.5 355.5L1565.5 375.5M1565.5 375.5L1519.5 383.5M1519.5 383.5L1445.5 414.5M1445.5 414.5L1363.5 447.5M1363.5 447.5L1324.5 475.5M1668.5 294.5L1686.5 311.5M1470.5 122.5L1562.5 103.5M1470.5 122.5L1484.5 136.5M1484.5 136.5L1590.5 127.5M1562.5 103.5L1580.5 100.5M1580.5 100.5L1607.5 105.5M1562.5 103.5L1578.5 117.5M1580.5 100.5L1590.5 127.5M1590.5 127.5L1607.5 105.5M1607.5 105.5L1645.5 137.5M1645.5 137.5L1685.5 170.5M1645.5 137.5L1628.5 159.5M1645.5 137.5L1643.5 154.5M1643.5 154.5L1683.5 187.5M1643.5 154.5L1632.5 243.5M1628.5 159.5L1667.5 193.5M1590.5 127.5L1628.5 159.5M1685.5 170.5L1667.5 193.5M1667.5 193.5L1683.5 187.5M1555.5 191.5L1570.5 205.5M1578.5 117.5L1605.5 122.5M1457.5 169.5L1505.5 215.5M1562.5 103.5L1555.5 191.5M1578.5 117.5L1570.5 205.5M1605.5 122.5L1596.5 210.5M1605.5 122.5L1667.5 193.5M1685.5 170.5L1683.5 187.5M1683.5 187.5L1681.5 204.5M1681.5 204.5L1700.5 220.5M1700.5 220.5L1686.5 311.5M1683.5 187.5L1670.5 277.5M1670.5 277.5L1668.5 294.5M1668.5 294.5L1686.5 311.5M1505.5 215.5L1552.5 204.5M1552.5 204.5L1570.5 205.5M1570.5 205.5L1667.5 193.5M1505.5 215.5L1524.5 292.5M1552.5 204.5L1559.5 269.5M1552.5 204.5L1606.5 248.5M1570.5 205.5L1596.5 210.5M1596.5 210.5L1632.5 243.5M1606.5 248.5L1683.5 187.5M1606.5 248.5L1681.5 204.5M1606.5 248.5L1624.5 264.5M1632.5 243.5L1670.5 277.5M1559.5 269.5L1606.5 248.5M1559.5 269.5L1574.5 284.5M1524.5 292.5L1559.5 269.5M1524.5 292.5L1574.5 284.5M1574.5 284.5L1624.5 264.5M1624.5 264.5L1700.5 220.5M1574.5 284.5L1565.5 375.5M1624.5 264.5L1613.5 355.5M1524.5 292.5L1519.5 383.5M1504.5 160.5L1552.5 204.5" stroke="#dc9ad0" stroke-width="1.05" fill="none" shape-rendering="crispEdges"/>
<path d="M1381.5 269.5L1380.5 198.5" stroke="#10d010" stroke-width="1.4" fill="none" shape-rendering="crispEdges"/>
<path d="M1381.5 269.5L1455.5 243.5" stroke="#c82020" stroke-width="1.4" fill="none" shape-rendering="crispEdges"/>
<path d="M1381.5 269.5L1427.5 318.5" stroke="#1010d0" stroke-width="1.4" fill="none" shape-rendering="crispEdges"/>
<path d="M1071.5 375.5L1079.5 428.5" stroke="#e8e040" stroke-width="1.2" fill="none" shape-rendering="crispEdges"/>
<path d="M1087 259h5v5h-5zM1185 213h5v5h-5zM1238 205h5v5h-5zM1066 287h5v5h-5zM1058 322h5v5h-5zM1098 342h5v5h-5zM1146 340h5v5h-5zM1194 307h5v5h-5zM1243 299h5v5h-5zM1249 290h5v5h-5zM1117 360h5v5h-5zM1077 362h5v5h-5zM1069 373h5v5h-5zM1096 378h5v5h-5zM1068 387h5v5h-5zM1084 396h5v5h-5zM1077 426h5v5h-5zM1100 420h5v5h-5zM1092 449h5v5h-5zM1107 472h5v5h-5zM1137 439h5v5h-5zM1173 440h5v5h-5zM1212 431h5v5h-5zM1145 504h5v5h-5zM1181 516h5v5h-5zM1219 516h5v5h-5zM1335 151h5v5h-5zM1317 181h5v5h-5zM1378 196h5v5h-5zM1410 124h5v5h-5zM1457 117h5v5h-5zM1421 137h5v5h-5zM1389 156h5v5h-5zM1433 149h5v5h-5zM1455 167h5v5h-5zM1464 210h5v5h-5zM1419 226h5v5h-5zM1389 246h5v5h-5zM1425 244h5v5h-5zM1295 269h5v5h-5zM1318 271h5v5h-5zM1357 340h5v5h-5zM1361 353h5v5h-5zM1446 320h5v5h-5zM1319 376h5v5h-5zM1503 213h5v5h-5zM1522 290h5v5h-5zM1517 381h5v5h-5zM1322 473h5v5h-5zM1361 445h5v5h-5zM1443 412h5v5h-5zM1563 373h5v5h-5zM1611 353h5v5h-5zM1684 309h5v5h-5zM1666 292h5v5h-5zM1468 120h5v5h-5zM1482 134h5v5h-5zM1560 101h5v5h-5zM1578 98h5v5h-5zM1576 115h5v5h-5zM1643 135h5v5h-5zM1641 152h5v5h-5zM1626 157h5v5h-5zM1502 158h5v5h-5zM1683 168h5v5h-5zM1681 185h5v5h-5zM1665 191h5v5h-5zM1679 202h5v5h-5zM1698 218h5v5h-5zM1553 189h5v5h-5zM1550 202h5v5h-5zM1568 203h5v5h-5zM1604 246h5v5h-5zM1630 241h5v5h-5zM1622 262h5v5h-5zM1557 267h5v5h-5zM1572 282h5v5h-5zM1668 275h5v5h-5z" fill="#e88cc6"/>
<path d="M1605 103h5v5h-5zM1588 125h5v5h-5zM1603 120h5v5h-5zM1594 208h5v5h-5z" fill="#7fe0b0"/>
</svg>
<div style="position:absolute;left:167px;top:457px;width:84px;height:179px;background:#f0f0f0;box-shadow:inset 1px 1px 0 #e8e8e8, inset -1px -1px 0 #c8c8c8;"></div>
<div style="position:absolute;left:168px;top:458px;width:82px;height:24px;background:linear-gradient(#c2ccd6,#d8e2ec);"></div>
<div class="t" style="left:170px;top:465px;font:11.5px 'Liberation Sans',sans-serif;color:#8c939a;">Select</div>
<div class="b" style="left:177px;top:490px;width:63px;height:16px;line-height:16px;background:#fafafa;box-shadow:inset 2px 2px 0 #6e6e6e;color:#000;font-size:11px;"><span style="position:relative;top:1.5px;left:1px;">Normal</span></div>
<div class="b" style="left:177px;top:507px;width:63px;height:16px;line-height:16px;background:#f0f0f0;box-shadow:inset 1px 1px 0 #fff, inset -1px -1px 0 #a8a8a8;color:#000;font-size:11px;"><span style="">Joined face</span></div>
<div style="position:absolute;left:177px;top:507px;width:63px;height:16px;box-shadow:inset -1px -1px 0 #696969, inset -2px -2px 0 #a8a8a8;"></div>
<div class="b" style="left:177px;top:524px;width:63px;height:16px;line-height:16px;background:#f0f0f0;box-shadow:inset 1px 1px 0 #fff, inset -1px -1px 0 #a8a8a8;color:#000;font-size:11px;"><span style="">Belt</span></div>
<div style="position:absolute;left:177px;top:524px;width:63px;height:16px;box-shadow:inset -1px -1px 0 #696969, inset -2px -2px 0 #a8a8a8;"></div>
<div class="b" style="left:177px;top:541px;width:63px;height:16px;line-height:16px;background:#f0f0f0;box-shadow:inset 1px 1px 0 #fff, inset -1px -1px 0 #a8a8a8;color:#000;font-size:11px;"><span style="">Edge loop</span></div>
<div style="position:absolute;left:177px;top:541px;width:63px;height:16px;box-shadow:inset -1px -1px 0 #696969, inset -2px -2px 0 #a8a8a8;"></div>
<div class="b" style="left:177px;top:558px;width:63px;height:16px;line-height:16px;background:#f0f0f0;box-shadow:inset 1px 1px 0 #fff, inset -1px -1px 0 #a8a8a8;color:#000;font-size:11px;"><span style="">Growing</span></div>
<div style="position:absolute;left:177px;top:558px;width:63px;height:16px;box-shadow:inset -1px -1px 0 #696969, inset -2px -2px 0 #a8a8a8;"></div>
<div class="b" style="left:177px;top:575px;width:63px;height:16px;line-height:16px;background:#f0f0f0;box-shadow:inset 1px 1px 0 #fff, inset -1px -1px 0 #a8a8a8;color:#000;font-size:11px;"><span style="">Route</span></div>
<div style="position:absolute;left:177px;top:575px;width:63px;height:16px;box-shadow:inset -1px -1px 0 #696969, inset -2px -2px 0 #a8a8a8;"></div>
<div class="b" style="left:177px;top:592px;width:63px;height:16px;line-height:16px;background:#f0f0f0;box-shadow:inset 1px 1px 0 #fff, inset -1px -1px 0 #a8a8a8;color:#000;font-size:11px;"><span style="">CurObj</span></div>
<div style="position:absolute;left:177px;top:592px;width:63px;height:16px;box-shadow:inset -1px -1px 0 #696969, inset -2px -2px 0 #a8a8a8;"></div>
<div class="b" style="left:177px;top:609px;width:63px;height:16px;line-height:16px;background:#f0f0f0;box-shadow:inset 1px 1px 0 #fff, inset -1px -1px 0 #a8a8a8;color:#000;font-size:11px;"><span style="">Brush</span></div>
<div style="position:absolute;left:177px;top:609px;width:63px;height:16px;box-shadow:inset -1px -1px 0 #696969, inset -2px -2px 0 #a8a8a8;"></div>
</body></html>
